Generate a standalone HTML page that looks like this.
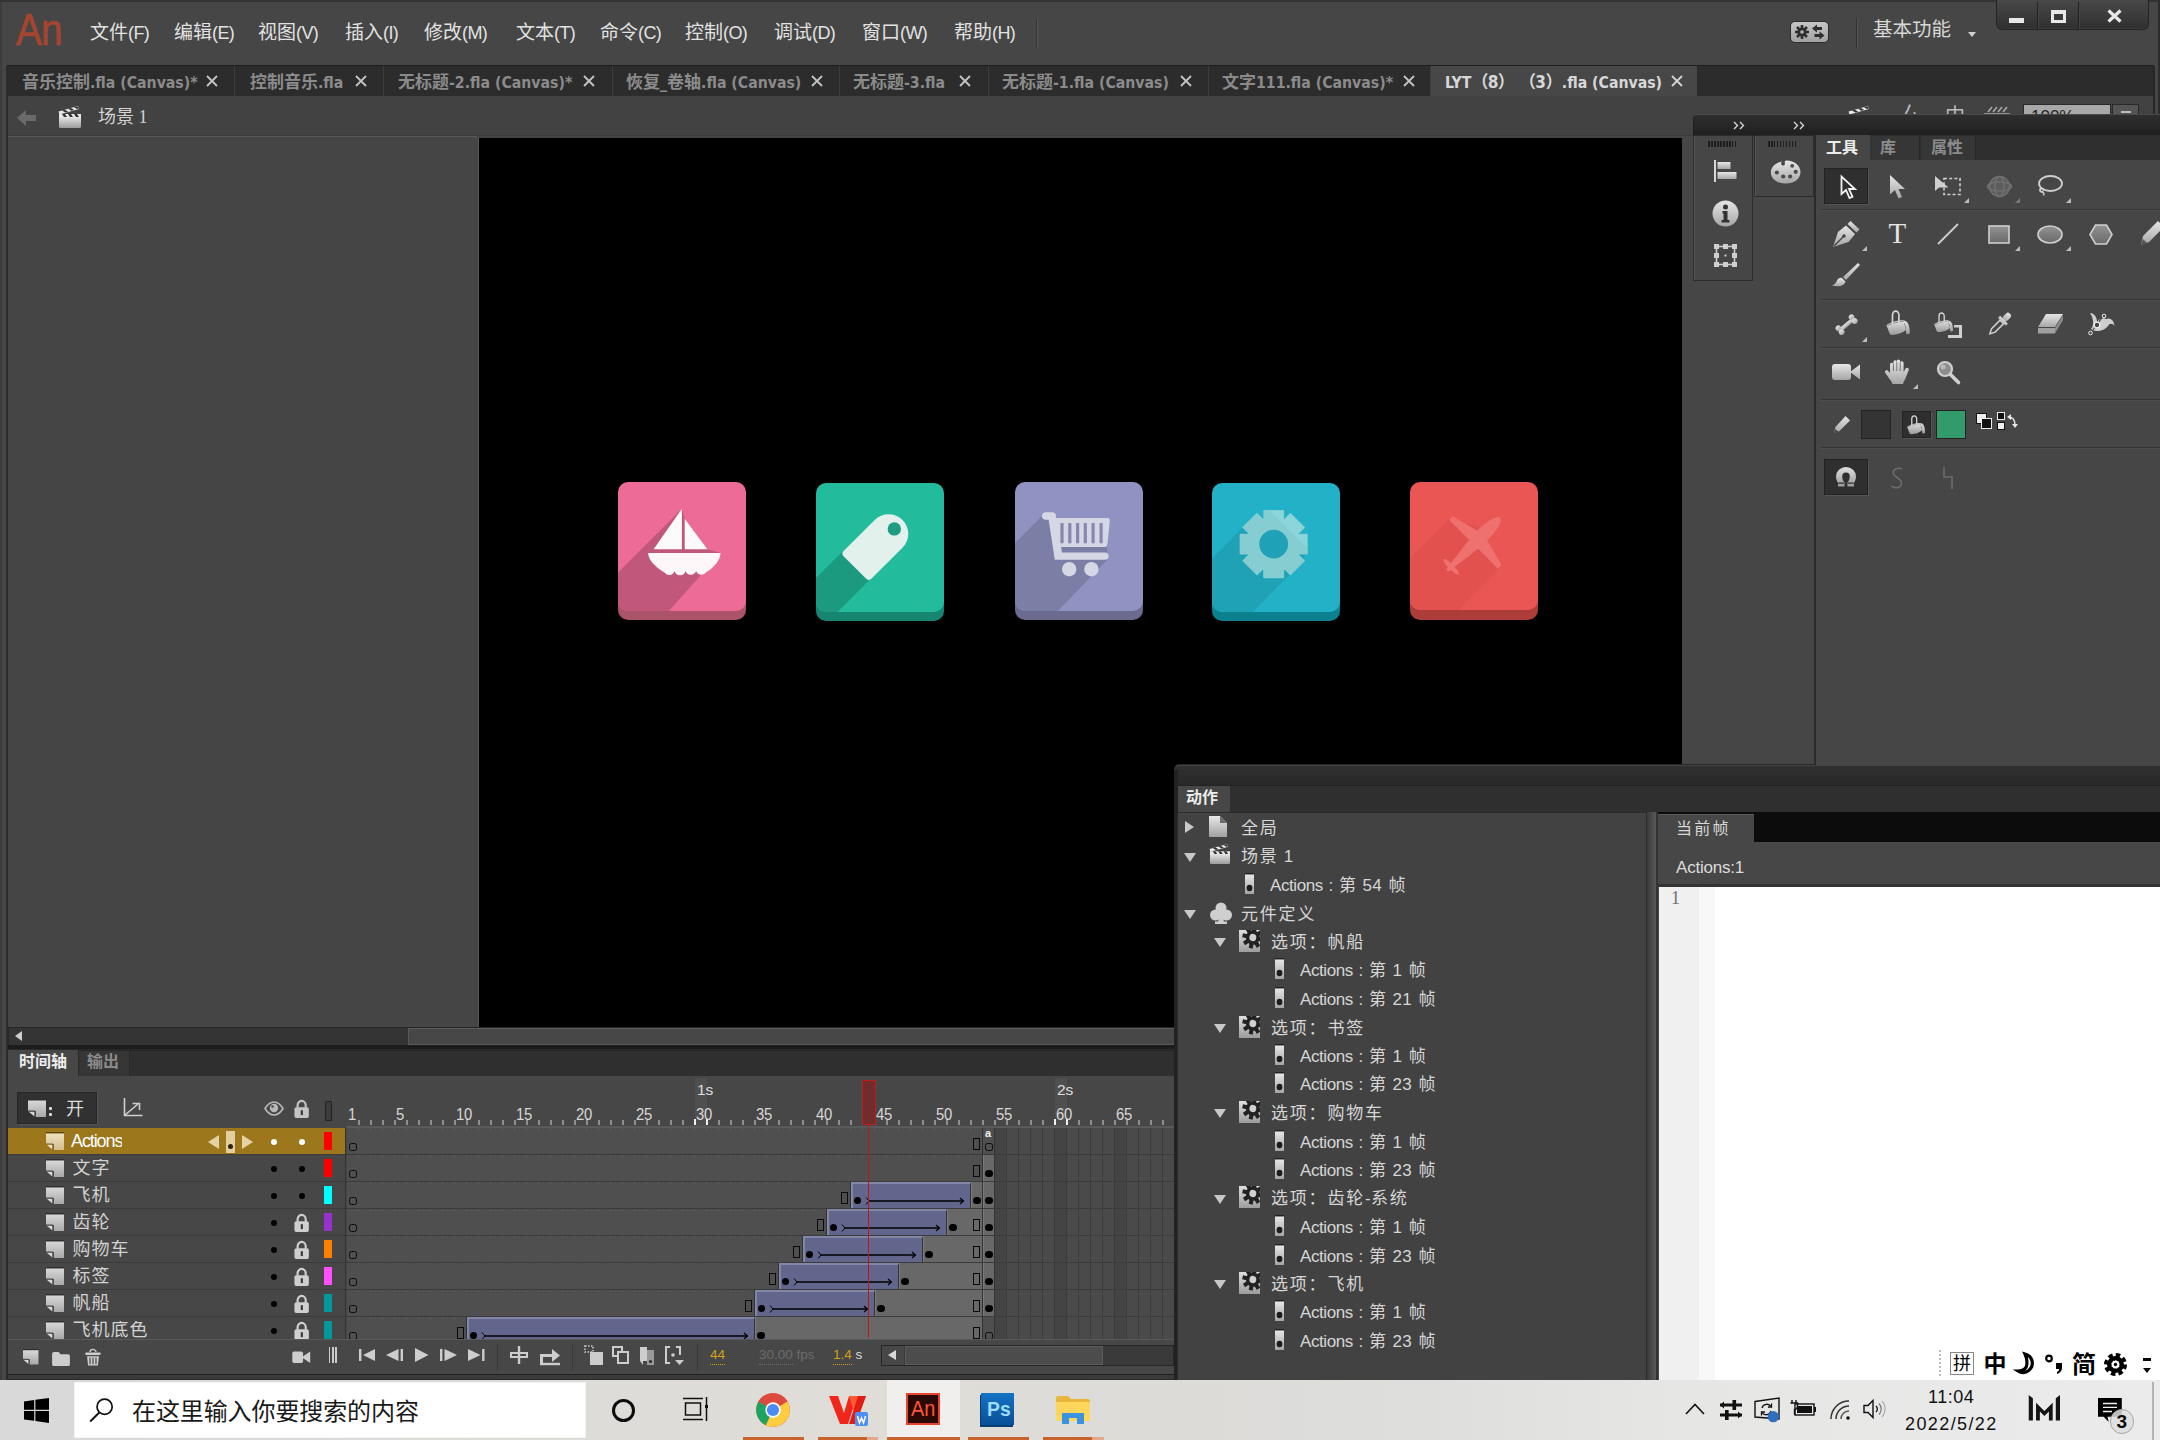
<!DOCTYPE html>
<html lang="zh-CN"><head><meta charset="utf-8"><title>Adobe Animate</title>
<style>
*{box-sizing:border-box;margin:0;padding:0}
html,body{width:2160px;height:1440px;overflow:hidden;background:#464646}
body{position:relative;font-family:"Liberation Sans","Noto Sans CJK SC",sans-serif;color:#d6d6d6;font-size:16px;line-height:1}
.a{position:absolute}
.t{position:absolute;white-space:nowrap;line-height:1}
svg{position:absolute;overflow:visible}
</style></head><body>

<div class="a" style="left:0;top:0;width:2160px;height:2px;background:#333"></div>
<div class="a" style="left:0;top:0;width:2px;height:1380px;background:#333"></div>
<div class="a" style="left:2158px;top:0px;width:2px;height:114px;background:#2c2c2c"></div>
<div class="t" style="left:16px;top:7px;font-size:45px;color:#a6452f;transform:scaleX(.86);transform-origin:0 0;letter-spacing:-1px;-webkit-text-stroke:.7px #a6452f">An</div>
<div class="t" style="left:90px;top:23px;font-size:19px;color:#e2e2e2">文件<span style="font-size:18px;letter-spacing:-.6px">(F)</span></div>
<div class="t" style="left:174px;top:23px;font-size:19px;color:#e2e2e2">编辑<span style="font-size:18px;letter-spacing:-.6px">(E)</span></div>
<div class="t" style="left:258px;top:23px;font-size:19px;color:#e2e2e2">视图<span style="font-size:18px;letter-spacing:-.6px">(V)</span></div>
<div class="t" style="left:345px;top:23px;font-size:19px;color:#e2e2e2">插入<span style="font-size:18px;letter-spacing:-.6px">(I)</span></div>
<div class="t" style="left:424px;top:23px;font-size:19px;color:#e2e2e2">修改<span style="font-size:18px;letter-spacing:-.6px">(M)</span></div>
<div class="t" style="left:516px;top:23px;font-size:19px;color:#e2e2e2">文本<span style="font-size:18px;letter-spacing:-.6px">(T)</span></div>
<div class="t" style="left:600px;top:23px;font-size:19px;color:#e2e2e2">命令<span style="font-size:18px;letter-spacing:-.6px">(C)</span></div>
<div class="t" style="left:685px;top:23px;font-size:19px;color:#e2e2e2">控制<span style="font-size:18px;letter-spacing:-.6px">(O)</span></div>
<div class="t" style="left:774px;top:23px;font-size:19px;color:#e2e2e2">调试<span style="font-size:18px;letter-spacing:-.6px">(D)</span></div>
<div class="t" style="left:862px;top:23px;font-size:19px;color:#e2e2e2">窗口<span style="font-size:18px;letter-spacing:-.6px">(W)</span></div>
<div class="t" style="left:954px;top:23px;font-size:19px;color:#e2e2e2">帮助<span style="font-size:18px;letter-spacing:-.6px">(H)</span></div>
<div class="a" style="left:1036px;top:18px;width:1px;height:30px;background:#333"></div><div class="a" style="left:1037px;top:18px;width:1px;height:30px;background:#565656"></div>
<div class="a" style="left:1790px;top:21px;width:39px;height:22px;border-radius:5px;background:linear-gradient(#c6c6c6,#a2a2a2);border:1px solid #2e2e2e"></div>
<svg style="left:1793px;top:23px" width="34" height="18" viewBox="0 0 34 18">
<g fill="#2e2e2e"><circle cx="9" cy="9" r="4.6"/><g stroke="#2e2e2e" stroke-width="2.6"><path d="M9 2v14M2 9h14M4 4l10 10M14 4L4 14"/></g><circle cx="9" cy="9" r="1.8" fill="#b8b8b8"/>
<path d="M24 1.5l-5 4 5 4v-2.6h5v-2.8h-5z"/><path d="M26.5 8.5l5 4-5 4v-2.6h-5v-2.8h5z"/></g></svg>
<div class="a" style="left:1856px;top:18px;width:1px;height:30px;background:#323232"></div><div class="a" style="left:1857px;top:18px;width:1px;height:30px;background:#545454"></div>
<div class="t" style="left:1873px;top:20px;font-size:19.5px;color:#d8d8d8">基本功能</div>
<div class="a" style="left:1968px;top:32px;width:0;height:0;border:4px solid transparent;border-top:5px solid #d0d0d0"></div>
<div class="a" style="left:1996px;top:0;width:153px;height:30px;border-radius:0 0 6px 6px;background:linear-gradient(#484848,#303030);border:1px solid #242424;border-top:none;box-shadow:inset 0 -1px 0 #3a3a3a"></div>
<div class="a" style="left:2037px;top:2px;width:1px;height:27px;background:#222"></div><div class="a" style="left:2038px;top:2px;width:1px;height:27px;background:#454545"></div>
<div class="a" style="left:2078px;top:2px;width:1px;height:27px;background:#222"></div><div class="a" style="left:2079px;top:2px;width:1px;height:27px;background:#454545"></div>
<div class="a" style="left:2009px;top:18px;width:15px;height:5px;background:#e8e8e8"></div>
<div class="a" style="left:2051px;top:10px;width:15px;height:13px;border:3px solid #e8e8e8;border-top-width:4px"></div>
<svg style="left:2107px;top:10px" width="15" height="12" viewBox="0 0 15 12"><path d="M1.5 0.5L13.5 11.5M13.5 0.5L1.5 11.5" stroke="#e8e8e8" stroke-width="3.2"/></svg>
<div class="a" style="left:7px;top:65px;width:2147px;height:31px;background:#2c2c2c;border-top:1px solid #1e1e1e;border-left:1px solid #1e1e1e"></div>
<div class="t" style="left:22px;top:73.500px;color:#8b8b8b;font-family:'DejaVu Sans Condensed','Noto Sans CJK SC',sans-serif;font-weight:bold;font-size:15.700px"><span style="font-size:17px">音乐控制</span>.fla (Canvas)*</div>
<svg style="left:206px;top:75px" width="12" height="12" viewBox="0 0 12 12"><path d="M1 1l10 10M11 1L1 11" stroke="#c4c4c4" stroke-width="1.800"/></svg>
<div class="a" style="left:234px;top:66px;width:1px;height:30px;background:#3d3d3d"></div>
<div class="t" style="left:250px;top:73.500px;color:#8b8b8b;font-family:'DejaVu Sans Condensed','Noto Sans CJK SC',sans-serif;font-weight:bold;font-size:15.700px"><span style="font-size:17px">控制音乐</span>.fla</div>
<svg style="left:355px;top:75px" width="12" height="12" viewBox="0 0 12 12"><path d="M1 1l10 10M11 1L1 11" stroke="#c4c4c4" stroke-width="1.800"/></svg>
<div class="a" style="left:383px;top:66px;width:1px;height:30px;background:#3d3d3d"></div>
<div class="t" style="left:398px;top:73.500px;color:#8b8b8b;font-family:'DejaVu Sans Condensed','Noto Sans CJK SC',sans-serif;font-weight:bold;font-size:15.700px"><span style="font-size:17px">无标题</span>-2.fla (Canvas)*</div>
<svg style="left:583px;top:75px" width="12" height="12" viewBox="0 0 12 12"><path d="M1 1l10 10M11 1L1 11" stroke="#c4c4c4" stroke-width="1.800"/></svg>
<div class="a" style="left:612px;top:66px;width:1px;height:30px;background:#3d3d3d"></div>
<div class="t" style="left:626px;top:73.500px;color:#8b8b8b;font-family:'DejaVu Sans Condensed','Noto Sans CJK SC',sans-serif;font-weight:bold;font-size:15.700px"><span style="font-size:17px">恢复</span>_<span style="font-size:17px">卷轴</span>.fla (Canvas)</div>
<svg style="left:811px;top:75px" width="12" height="12" viewBox="0 0 12 12"><path d="M1 1l10 10M11 1L1 11" stroke="#c4c4c4" stroke-width="1.800"/></svg>
<div class="a" style="left:839px;top:66px;width:1px;height:30px;background:#3d3d3d"></div>
<div class="t" style="left:853px;top:73.500px;color:#8b8b8b;font-family:'DejaVu Sans Condensed','Noto Sans CJK SC',sans-serif;font-weight:bold;font-size:15.700px"><span style="font-size:17px">无标题</span>-3.fla</div>
<svg style="left:959px;top:75px" width="12" height="12" viewBox="0 0 12 12"><path d="M1 1l10 10M11 1L1 11" stroke="#c4c4c4" stroke-width="1.800"/></svg>
<div class="a" style="left:988px;top:66px;width:1px;height:30px;background:#3d3d3d"></div>
<div class="t" style="left:1002px;top:73.500px;color:#8b8b8b;font-family:'DejaVu Sans Condensed','Noto Sans CJK SC',sans-serif;font-weight:bold;font-size:15.700px"><span style="font-size:17px">无标题</span>-1.fla (Canvas)</div>
<svg style="left:1180px;top:75px" width="12" height="12" viewBox="0 0 12 12"><path d="M1 1l10 10M11 1L1 11" stroke="#c4c4c4" stroke-width="1.800"/></svg>
<div class="a" style="left:1208px;top:66px;width:1px;height:30px;background:#3d3d3d"></div>
<div class="t" style="left:1222px;top:73.500px;color:#8b8b8b;font-family:'DejaVu Sans Condensed','Noto Sans CJK SC',sans-serif;font-weight:bold;font-size:15.700px"><span style="font-size:17px">文字</span>111.fla (Canvas)*</div>
<svg style="left:1403px;top:75px" width="12" height="12" viewBox="0 0 12 12"><path d="M1 1l10 10M11 1L1 11" stroke="#c4c4c4" stroke-width="1.800"/></svg>
<div class="a" style="left:1430px;top:66px;width:1px;height:30px;background:#3d3d3d"></div>
<div class="a" style="left:1431px;top:66px;width:266px;height:31px;background:#474747"></div>
<div class="t" style="left:1445px;top:73.500px;color:#d8d8d8;font-family:'DejaVu Sans Condensed','Noto Sans CJK SC',sans-serif;font-weight:bold;font-size:15.700px">LYT<span style="font-size:17px;letter-spacing:-.6px">（8） （3）</span>.fla (Canvas)</div>
<svg style="left:1671px;top:75px" width="12" height="12" viewBox="0 0 12 12"><path d="M1 1l10 10M11 1L1 11" stroke="#d4d4d4" stroke-width="1.800"/></svg>
<div class="a" style="left:2153px;top:66px;width:1.500px;height:48px;background:#262626"></div>
<div class="a" style="left:8px;top:96px;width:2145px;height:39px;background:#424242"></div>
<div class="a" style="left:8px;top:135px;width:2145px;height:1px;background:#3a3a3a"></div>
<svg style="left:17px;top:109px" width="19" height="18" viewBox="0 0 19 18"><path d="M0 9l9-8v5h10v6H9v5z" fill="#6a6a6a"/></svg>
<svg style="left:58px;top:106px" width="24.0" height="22.0" viewBox="0 0 24 22">
<defs><linearGradient id="cg58" x1="0" y1="0" x2="0" y2="1"><stop offset="0" stop-color="#e4e4e4"/><stop offset="1" stop-color="#9c9c9c"/></linearGradient></defs>
<path d="M1 11h22v9.500a1.500 1.500 0 0 1-1.500 1.500h-19a1.500 1.500 0 0 1-1.500-1.500z" fill="url(#cg58)"/>
<path d="M1 8h22v3H1z" fill="#e8e8e8"/><path d="M4 8l2 3h3l-2-3zM10 8l2 3h3l-2-3zM16 8l2 3h3l-2-3z" fill="#333"/>
<path d="M0.500 5.500L20 0l1 3L1.500 8.500z" fill="#e8e8e8"/><path d="M4 4.500l3.500 2 2.800-.8-3.500-2zM10 2.800l3.500 2 2.800-.8-3.500-2zM16 1.200l3 1.800 1.800-.5-.5-1.800-1.500-.3z" fill="#333"/>
</svg>
<div class="t" style="left:98px;top:108px;font-size:18px;color:#d2d2d2;font-family:'Liberation Serif','Noto Sans CJK SC',serif">场景 1</div>
<svg style="left:1848px;top:106px" width="24.0" height="22.0" viewBox="0 0 24 22">
<defs><linearGradient id="cg1848" x1="0" y1="0" x2="0" y2="1"><stop offset="0" stop-color="#e4e4e4"/><stop offset="1" stop-color="#9c9c9c"/></linearGradient></defs>
<path d="M1 11h22v9.500a1.500 1.500 0 0 1-1.500 1.500h-19a1.500 1.500 0 0 1-1.500-1.500z" fill="url(#cg1848)"/>
<path d="M1 8h22v3H1z" fill="#e8e8e8"/><path d="M4 8l2 3h3l-2-3zM10 8l2 3h3l-2-3zM16 8l2 3h3l-2-3z" fill="#333"/>
<path d="M0.500 5.500L20 0l1 3L1.500 8.500z" fill="#e8e8e8"/><path d="M4 4.500l3.500 2 2.800-.8-3.500-2zM10 2.800l3.500 2 2.800-.8-3.500-2zM16 1.200l3 1.800 1.800-.5-.5-1.800-1.500-.3z" fill="#333"/>
</svg>
<div class="t" style="left:1900px;top:104px;font-size:20px;color:#bbb">厶</div>
<div class="t" style="left:1945px;top:106px;font-size:20px;color:#bbb">中</div>
<svg style="left:1985px;top:106px" width="28" height="14" viewBox="0 0 28 14"><path d="M3 6l4-5M8 6l4-5M13 6l4-5M18 6l4-5M0 8h24v6H0z" stroke="#aaa" stroke-width="1.6" fill="none"/></svg>
<div class="a" style="left:2023px;top:104px;width:88px;height:14px;background:#a8a8a8;border:1px solid #2a2a2a"></div>
<div class="t" style="left:2031px;top:108px;font-size:17px;color:#222">100%</div>
<div class="a" style="left:2112px;top:104px;width:27px;height:14px;background:#555;border:1px solid #2a2a2a"></div>
<div class="a" style="left:2121px;top:111px;width:10px;height:2px;background:#bbb"></div>
<div class="a" style="left:8px;top:136px;width:1675px;height:890px;background:#454545"></div>
<div class="a" style="left:8px;top:136px;width:469px;height:1px;background:#585858"></div>
<div class="a" style="left:478px;top:138px;width:1px;height:888px;background:#555"></div>
<div class="a" style="left:479px;top:138px;width:1203px;height:889.500px;background:#000"></div>
<svg style="left:617.5px;top:482px" width="128" height="138" viewBox="0 0 128 138">
<defs><clipPath id="cpa"><rect x="0" y="0" width="128" height="129" rx="10" ry="10"/></clipPath></defs>
<rect x="0" y="10" width="128" height="128" rx="10" ry="10" fill="#ab5369"/>
<rect x="0" y="0" width="128" height="129" rx="10" ry="10" fill="#ed6c97"/>
<g clip-path="url(#cpa)"><polygon points="63.900,26.700 66.700,36.700 89.400,67.200 102.600,71.100 45.500,135 -5,135 -5,95.600" fill="#c1577b"/></g>
<path d="M63.900 26.700L35.600 67.200H63.900z" fill="#fbfbfb"/><path d="M66.700 36.700V67.200H89.400z" fill="#fbfbfb"/>
<path d="M30 71.100H102.600C101.800 78.500 97 85 87.600 90.700A5.600 5.600 0 0 1 78.050 89.050A5.600 5.600 0 0 1 67.500 89.050A5.600 5.600 0 0 1 56.650 89.050A5.600 5.600 0 0 1 46.800 90.700C37 85 30.800 78.500 30 71.100z" fill="#fdf7f9"/>
</svg>
<svg style="left:816px;top:483px" width="128" height="138" viewBox="0 0 128 138">
<defs><clipPath id="cpb"><rect x="0" y="0" width="128" height="129" rx="10" ry="10"/></clipPath></defs>
<rect x="0" y="10" width="128" height="128" rx="10" ry="10" fill="#178671"/>
<rect x="0" y="0" width="128" height="129" rx="10" ry="10" fill="#22bc9c"/>
<g clip-path="url(#cpb)"><polygon points="25,70 -75,170 -47.800,198.300 52.200,98.300 60,60" fill="#1c9a80"/></g>
<g transform="translate(72.600,50.800) rotate(-45)"><path d="M-43.700 -19.650H0a19.650 19.650 0 0 1 0 39.300H-43.700a4 4 0 0 1-4-4v-31.300a4 4 0 0 1 4-4z" fill="#e2f1eb"/></g><circle cx="78.300" cy="45.900" r="6.700" fill="#1f9c82"/>
</svg>
<svg style="left:1014.8px;top:482px" width="128" height="138" viewBox="0 0 128 138">
<defs><clipPath id="cpc"><rect x="0" y="0" width="128" height="129" rx="10" ry="10"/></clipPath></defs>
<rect x="0" y="10" width="128" height="128" rx="10" ry="10" fill="#6a6b8f"/>
<rect x="0" y="0" width="128" height="129" rx="10" ry="10" fill="#9093c1"/>
<g clip-path="url(#cpc)"><polygon points="27,33.900 -5,65.900 -5,135 37,135 93.100,77 92,65 94.500,39 41,38" fill="#7b7ea5"/></g>
<g fill="#d6d7e5"><rect x="27" y="30.200" width="14" height="7.600" rx="3.800"/>
<path d="M33.100 34L40.900 34L47 70.600H90a3.600 3.600 0 0 1 0 7.200H39.800z"/>
<path d="M38 36.100H92a2.800 2.800 0 0 1 2.800 3.100L92.400 62.500a2.800 2.800 0 0 1-2.800 2.500H43z"/>
<circle cx="54.200" cy="87.200" r="7.200"/><circle cx="76.400" cy="87.200" r="7.200"/></g><rect x="45.4" y="41.100" width="3.200" height="20.200" fill="#8688b0"/><rect x="53.2" y="41.100" width="3.200" height="20.200" fill="#8688b0"/><rect x="61.0" y="41.100" width="3.200" height="20.200" fill="#8688b0"/><rect x="68.7" y="41.100" width="3.200" height="20.200" fill="#8688b0"/><rect x="76.5" y="41.100" width="3.200" height="20.200" fill="#8688b0"/><rect x="84.5" y="41.100" width="3.200" height="20.200" fill="#8688b0"/>
</svg>
<svg style="left:1212px;top:483px" width="128" height="138" viewBox="0 0 128 138">
<defs><clipPath id="cpd"><rect x="0" y="0" width="128" height="129" rx="10" ry="10"/></clipPath></defs>
<rect x="0" y="10" width="128" height="128" rx="10" ry="10" fill="#0b808e"/>
<rect x="0" y="0" width="128" height="129" rx="10" ry="10" fill="#22b1c7"/>
<g clip-path="url(#cpd)"><polygon points="32.200,43.300 -5,80.500 -5,135 35,135 91.100,77.800 95,61 61,27" fill="#1fa1b6"/></g>
<defs><clipPath id="gcl"><path d="M52.0 41.1 L52.0 27.8 L71.4 27.8 L71.4 41.1 L69.0 40.1 L78.4 30.7 L92.1 44.4 L82.7 53.8 L81.7 51.4 L95.0 51.4 L95.0 70.8 L81.7 70.8 L82.7 68.4 L92.1 77.8 L78.4 91.5 L69.0 82.1 L71.4 81.1 L71.4 94.4 L52.0 94.4 L52.0 81.1 L54.4 82.1 L45.0 91.5 L31.3 77.8 L40.7 68.4 L41.7 70.8 L28.4 70.8 L28.4 51.4 L41.7 51.4 L40.7 53.8 L31.3 44.4 L45.0 30.7 L54.4 40.1Z"/><circle cx="61.700" cy="61.100" r="25.800"/></clipPath></defs>
<path d="M52.0 41.1 L52.0 27.8 L71.4 27.8 L71.4 41.1 L69.0 40.1 L78.4 30.7 L92.1 44.4 L82.7 53.8 L81.7 51.4 L95.0 51.4 L95.0 70.8 L81.7 70.8 L82.7 68.4 L92.1 77.8 L78.4 91.5 L69.0 82.1 L71.4 81.1 L71.4 94.4 L52.0 94.4 L52.0 81.1 L54.4 82.1 L45.0 91.5 L31.3 77.8 L40.7 68.4 L41.7 70.8 L28.4 70.8 L28.4 51.4 L41.7 51.4 L40.7 53.8 L31.3 44.4 L45.0 30.7 L54.4 40.1Z" fill="#85cdd1" stroke="#85cdd1" stroke-width="1.500" stroke-linejoin="round"/><circle cx="61.700" cy="61.100" r="25.800" fill="#85cdd1"/>
<g clip-path="url(#gcl)"><polygon points="40,10 110,10 110,80 " fill="#8ad6da"/></g>
<circle cx="61.700" cy="61.100" r="14.400" fill="#1fa2b7"/>
</svg>
<svg style="left:1409.8px;top:482px" width="128" height="138" viewBox="0 0 128 138">
<defs><clipPath id="cpe"><rect x="0" y="0" width="128" height="128" rx="10" ry="10"/></clipPath></defs>
<rect x="0" y="10" width="128" height="128" rx="10" ry="10" fill="#ad3d38"/>
<rect x="0" y="0" width="128" height="128" rx="10" ry="10" fill="#ea5653"/>
<g clip-path="url(#cpe)"><polygon points="39.200,36.700 -5,80.900 -5,135 42,135 90.300,85.500 70,45" fill="#e3514f"/></g>
<g transform="translate(65.900,60) rotate(-45)" fill="#ee7170"><path d="M34.500 0C34.500 -3.500 24 -7.200 9 -7C-8 -6.500-28 -3-39 -1.800a1.800 1.800 0 0 0 0 3.600C-28 3-8 6.500 9 7C24 7.200 34.500 3.500 34.500 0z"/>
<path d="M9.500 -5L1.800 -34.500L-3.400 -34.500L-3.200 -5zM9.500 5L1.800 34.500L-3.400 34.500L-3.200 5z"/>
<ellipse cx="-35" cy="0" rx="2.600" ry="10.800"/></g>
</svg>
<div class="a" style="left:8px;top:1027px;width:1166px;height:19px;background:#343434;border:1px solid #262626"></div>
<div class="a" style="left:408px;top:1028px;width:766px;height:17px;background:#474747;border:1px solid #5a5a5a;border-right:none"></div>
<div class="a" style="left:15px;top:1031px;width:0;height:0;border:5.500px solid transparent;border-right:7px solid #cfcfcf;border-left:none"></div>
<div class="a" style="left:6px;top:1045px;width:1169px;height:5px;background:#1c1c1c"></div>
<div class="a" style="left:6px;top:66px;width:2px;height:1314px;background:#2b2b2b"></div>
<div class="a" style="left:0px;top:2px;width:2px;height:1378px;background:#3c3c3c"></div>
<div class="a" style="left:7px;top:1049px;width:1168px;height:331px;background:#474747;border:1px solid #2a2a2a"></div>
<div class="a" style="left:8px;top:1050px;width:1166px;height:26px;background:#2f2f2f;border-top:1px solid #262626"></div>
<div class="a" style="left:8px;top:1050px;width:70px;height:26px;background:#474747"></div>
<div class="a" style="left:78px;top:1051px;width:52px;height:25px;background:#363636;border-right:1px solid #2a2a2a;border-left:1px solid #2a2a2a"></div>
<div class="t" style="left:19px;top:1054px;font-size:16px;font-weight:bold;color:#ececec">时间轴</div>
<div class="t" style="left:87px;top:1054px;font-size:16px;font-weight:bold;color:#8a8a8a">输出</div>
<div class="a" style="left:17px;top:1092px;width:80px;height:32px;background:#313131;border:1px solid #262626;box-shadow:1px 1px 0 #555"></div>
<svg style="left:28px;top:1099px" width="18" height="18" viewBox="0 0 18 18"><defs><linearGradient id="lghb" x1="0" y1="0" x2="0" y2="1"><stop offset="0" stop-color="#d8d8d8"/><stop offset="1" stop-color="#a8a8a8"/></linearGradient></defs>
<path d="M0 0h18v1.500H0z" fill="#2e2e2e"/><path d="M0 1.500h18V18H7.500v-6H0z" fill="url(#lghb)"/><path d="M0.500 12.500h6.500v5.500z" fill="#d8d8d8"/><path d="M7 12v6" stroke="#2e2e2e" stroke-width="1.200"/><path d="M0 12h7" stroke="#2e2e2e" stroke-width=".8"/></svg>
<div class="a" style="left:49px;top:1107px;width:3px;height:3px;background:#ddd;border-radius:1px;box-shadow:0 6px 0 #ddd"></div>
<div class="t" style="left:66px;top:1100px;font-size:18px;color:#dcdcdc">开</div>
<svg style="left:123px;top:1098px" width="20" height="19" viewBox="0 0 20 19"><path d="M1.500 0v17.500h18" fill="none" stroke="#cfcfcf" stroke-width="1.600"/><path d="M2 17L15 6" stroke="#cfcfcf" stroke-width="1.600"/><path d="M9.500 5.500h7v6.500" fill="none" stroke="#cfcfcf" stroke-width="1.600"/></svg>
<svg style="left:264px;top:1101px" width="20" height="15" viewBox="0 0 20 15"><path d="M1 7.500C4 2.500 7 1 10 1s6 1.500 9 6.500c-3 5-6 6.500-9 6.500s-6-1.500-9-6.500z" fill="none" stroke="#b8b8b8" stroke-width="1.600"/><circle cx="10" cy="7" r="4.200" fill="#b8b8b8"/><circle cx="8.500" cy="5.500" r="1.300" fill="#474747"/></svg>
<svg style="left:294px;top:1098.5px" width="15.300" height="19.500" viewBox="0 0 17 20" preserveAspectRatio="none"><path d="M4 9V6.500a4.500 4.500 0 0 1 9 0V9" fill="none" stroke="#c4c4c4" stroke-width="2.400"/><rect x="0.500" y="8.500" width="16" height="11" rx="2" fill="#c4c4c4"/><rect x="7.500" y="11.500" width="2.400" height="5" fill="#3a3a3a"/></svg>
<div class="a" style="left:325px;top:1101px;width:7px;height:20px;border:1px solid #222;background:#3c3c3c;border-radius:1px"></div>
<div class="a" style="left:346px;top:1076px;width:828px;height:51px;background:#474747"></div>
<div class="a" style="left:695px;top:1078px;width:12px;height:49px;background:#4f4f4f"></div>
<div class="a" style="left:1055px;top:1078px;width:12px;height:49px;background:#4f4f4f"></div>
<div class="a" style="left:346px;top:1126px;width:828px;height:2px;background:#5a5a5a"></div>
<div class="a" style="left:358px;top:1120px;width:1.500px;height:5px;background:#8e8e8e"></div><div class="a" style="left:370px;top:1120px;width:1.500px;height:5px;background:#8e8e8e"></div><div class="a" style="left:382px;top:1120px;width:1.500px;height:5px;background:#8e8e8e"></div><div class="a" style="left:394px;top:1120px;width:1.500px;height:5px;background:#8e8e8e"></div><div class="a" style="left:406px;top:1120px;width:1.500px;height:5px;background:#8e8e8e"></div><div class="a" style="left:418px;top:1120px;width:1.500px;height:5px;background:#8e8e8e"></div><div class="a" style="left:430px;top:1120px;width:1.500px;height:5px;background:#8e8e8e"></div><div class="a" style="left:442px;top:1120px;width:1.500px;height:5px;background:#8e8e8e"></div><div class="a" style="left:454px;top:1120px;width:1.500px;height:5px;background:#8e8e8e"></div><div class="a" style="left:466px;top:1120px;width:1.500px;height:5px;background:#8e8e8e"></div><div class="a" style="left:478px;top:1120px;width:1.500px;height:5px;background:#8e8e8e"></div><div class="a" style="left:490px;top:1120px;width:1.500px;height:5px;background:#8e8e8e"></div><div class="a" style="left:502px;top:1120px;width:1.500px;height:5px;background:#8e8e8e"></div><div class="a" style="left:514px;top:1120px;width:1.500px;height:5px;background:#8e8e8e"></div><div class="a" style="left:526px;top:1120px;width:1.500px;height:5px;background:#8e8e8e"></div><div class="a" style="left:538px;top:1120px;width:1.500px;height:5px;background:#8e8e8e"></div><div class="a" style="left:550px;top:1120px;width:1.500px;height:5px;background:#8e8e8e"></div><div class="a" style="left:562px;top:1120px;width:1.500px;height:5px;background:#8e8e8e"></div><div class="a" style="left:574px;top:1120px;width:1.500px;height:5px;background:#8e8e8e"></div><div class="a" style="left:586px;top:1120px;width:1.500px;height:5px;background:#8e8e8e"></div><div class="a" style="left:598px;top:1120px;width:1.500px;height:5px;background:#8e8e8e"></div><div class="a" style="left:610px;top:1120px;width:1.500px;height:5px;background:#8e8e8e"></div><div class="a" style="left:622px;top:1120px;width:1.500px;height:5px;background:#8e8e8e"></div><div class="a" style="left:634px;top:1120px;width:1.500px;height:5px;background:#8e8e8e"></div><div class="a" style="left:646px;top:1120px;width:1.500px;height:5px;background:#8e8e8e"></div><div class="a" style="left:658px;top:1120px;width:1.500px;height:5px;background:#8e8e8e"></div><div class="a" style="left:670px;top:1120px;width:1.500px;height:5px;background:#8e8e8e"></div><div class="a" style="left:682px;top:1120px;width:1.500px;height:5px;background:#8e8e8e"></div><div class="a" style="left:694px;top:1120px;width:1.500px;height:5px;background:#8e8e8e"></div><div class="a" style="left:706px;top:1120px;width:1.500px;height:5px;background:#8e8e8e"></div><div class="a" style="left:718px;top:1120px;width:1.500px;height:5px;background:#8e8e8e"></div><div class="a" style="left:730px;top:1120px;width:1.500px;height:5px;background:#8e8e8e"></div><div class="a" style="left:742px;top:1120px;width:1.500px;height:5px;background:#8e8e8e"></div><div class="a" style="left:754px;top:1120px;width:1.500px;height:5px;background:#8e8e8e"></div><div class="a" style="left:766px;top:1120px;width:1.500px;height:5px;background:#8e8e8e"></div><div class="a" style="left:778px;top:1120px;width:1.500px;height:5px;background:#8e8e8e"></div><div class="a" style="left:790px;top:1120px;width:1.500px;height:5px;background:#8e8e8e"></div><div class="a" style="left:802px;top:1120px;width:1.500px;height:5px;background:#8e8e8e"></div><div class="a" style="left:814px;top:1120px;width:1.500px;height:5px;background:#8e8e8e"></div><div class="a" style="left:826px;top:1120px;width:1.500px;height:5px;background:#8e8e8e"></div><div class="a" style="left:838px;top:1120px;width:1.500px;height:5px;background:#8e8e8e"></div><div class="a" style="left:850px;top:1120px;width:1.500px;height:5px;background:#8e8e8e"></div><div class="a" style="left:862px;top:1120px;width:1.500px;height:5px;background:#8e8e8e"></div><div class="a" style="left:874px;top:1120px;width:1.500px;height:5px;background:#8e8e8e"></div><div class="a" style="left:886px;top:1120px;width:1.500px;height:5px;background:#8e8e8e"></div><div class="a" style="left:898px;top:1120px;width:1.500px;height:5px;background:#8e8e8e"></div><div class="a" style="left:910px;top:1120px;width:1.500px;height:5px;background:#8e8e8e"></div><div class="a" style="left:922px;top:1120px;width:1.500px;height:5px;background:#8e8e8e"></div><div class="a" style="left:934px;top:1120px;width:1.500px;height:5px;background:#8e8e8e"></div><div class="a" style="left:946px;top:1120px;width:1.500px;height:5px;background:#8e8e8e"></div><div class="a" style="left:958px;top:1120px;width:1.500px;height:5px;background:#8e8e8e"></div><div class="a" style="left:970px;top:1120px;width:1.500px;height:5px;background:#8e8e8e"></div><div class="a" style="left:982px;top:1120px;width:1.500px;height:5px;background:#8e8e8e"></div><div class="a" style="left:994px;top:1120px;width:1.500px;height:5px;background:#8e8e8e"></div><div class="a" style="left:1006px;top:1120px;width:1.500px;height:5px;background:#8e8e8e"></div><div class="a" style="left:1018px;top:1120px;width:1.500px;height:5px;background:#8e8e8e"></div><div class="a" style="left:1030px;top:1120px;width:1.500px;height:5px;background:#8e8e8e"></div><div class="a" style="left:1042px;top:1120px;width:1.500px;height:5px;background:#8e8e8e"></div><div class="a" style="left:1054px;top:1120px;width:1.500px;height:5px;background:#8e8e8e"></div><div class="a" style="left:1066px;top:1120px;width:1.500px;height:5px;background:#8e8e8e"></div><div class="a" style="left:1078px;top:1120px;width:1.500px;height:5px;background:#8e8e8e"></div><div class="a" style="left:1090px;top:1120px;width:1.500px;height:5px;background:#8e8e8e"></div><div class="a" style="left:1102px;top:1120px;width:1.500px;height:5px;background:#8e8e8e"></div><div class="a" style="left:1114px;top:1120px;width:1.500px;height:5px;background:#8e8e8e"></div><div class="a" style="left:1126px;top:1120px;width:1.500px;height:5px;background:#8e8e8e"></div><div class="a" style="left:1138px;top:1120px;width:1.500px;height:5px;background:#8e8e8e"></div><div class="a" style="left:1150px;top:1120px;width:1.500px;height:5px;background:#8e8e8e"></div><div class="a" style="left:1162px;top:1120px;width:1.500px;height:5px;background:#8e8e8e"></div><div class="a" style="left:1174px;top:1120px;width:1.500px;height:5px;background:#8e8e8e"></div>
<div class="a" style="left:694px;top:1119px;width:2px;height:6px;background:#f0f0f0"></div><div class="a" style="left:706px;top:1119px;width:2px;height:6px;background:#f0f0f0"></div>
<div class="a" style="left:1054px;top:1119px;width:2px;height:6px;background:#f0f0f0"></div><div class="a" style="left:1066px;top:1119px;width:2px;height:6px;background:#f0f0f0"></div>
<div class="t" style="left:348px;top:1106px;font-size:16.500px;color:#d8d8d8;letter-spacing:-.3px;transform:scaleX(.9);transform-origin:0 0">1</div>
<div class="t" style="left:396px;top:1106px;font-size:16.500px;color:#d8d8d8;letter-spacing:-.3px;transform:scaleX(.9);transform-origin:0 0">5</div>
<div class="t" style="left:456px;top:1106px;font-size:16.500px;color:#d8d8d8;letter-spacing:-.3px;transform:scaleX(.9);transform-origin:0 0">10</div>
<div class="t" style="left:516px;top:1106px;font-size:16.500px;color:#d8d8d8;letter-spacing:-.3px;transform:scaleX(.9);transform-origin:0 0">15</div>
<div class="t" style="left:576px;top:1106px;font-size:16.500px;color:#d8d8d8;letter-spacing:-.3px;transform:scaleX(.9);transform-origin:0 0">20</div>
<div class="t" style="left:636px;top:1106px;font-size:16.500px;color:#d8d8d8;letter-spacing:-.3px;transform:scaleX(.9);transform-origin:0 0">25</div>
<div class="t" style="left:696px;top:1106px;font-size:16.500px;color:#d8d8d8;letter-spacing:-.3px;transform:scaleX(.9);transform-origin:0 0">30</div>
<div class="t" style="left:756px;top:1106px;font-size:16.500px;color:#d8d8d8;letter-spacing:-.3px;transform:scaleX(.9);transform-origin:0 0">35</div>
<div class="t" style="left:816px;top:1106px;font-size:16.500px;color:#d8d8d8;letter-spacing:-.3px;transform:scaleX(.9);transform-origin:0 0">40</div>
<div class="t" style="left:876px;top:1106px;font-size:16.500px;color:#d8d8d8;letter-spacing:-.3px;transform:scaleX(.9);transform-origin:0 0">45</div>
<div class="t" style="left:936px;top:1106px;font-size:16.500px;color:#d8d8d8;letter-spacing:-.3px;transform:scaleX(.9);transform-origin:0 0">50</div>
<div class="t" style="left:996px;top:1106px;font-size:16.500px;color:#d8d8d8;letter-spacing:-.3px;transform:scaleX(.9);transform-origin:0 0">55</div>
<div class="t" style="left:1056px;top:1106px;font-size:16.500px;color:#d8d8d8;letter-spacing:-.3px;transform:scaleX(.9);transform-origin:0 0">60</div>
<div class="t" style="left:1116px;top:1106px;font-size:16.500px;color:#d8d8d8;letter-spacing:-.3px;transform:scaleX(.9);transform-origin:0 0">65</div>
<div class="t" style="left:697px;top:1081.500px;font-size:15.500px;color:#dedede">1s</div>
<div class="t" style="left:1057px;top:1081.500px;font-size:15.500px;color:#dedede">2s</div>
<div class="a" style="left:8px;top:1128px;width:338px;height:26px;background:#9c771c"></div>
<div class="a" style="left:8px;top:1154px;width:1166px;height:1px;background:#3b3b3b"></div>
<div class="a" style="left:46px;top:1132px;width:18px;height:19px;overflow:hidden"><svg style="left:0px;top:0px" width="18" height="18" viewBox="0 0 18 18"><defs><linearGradient id="lgr0" x1="0" y1="0" x2="0" y2="1"><stop offset="0" stop-color="#f0e2c0"/><stop offset="1" stop-color="#d2bd8c"/></linearGradient></defs>
<path d="M0 0h18v1.500H0z" fill="#5a4510"/><path d="M0 1.500h18V18H7.500v-6H0z" fill="url(#lgr0)"/><path d="M0.500 12.500h6.500v5.500z" fill="#f0e2c0"/><path d="M7 12v6" stroke="#5a4510" stroke-width="1.200"/><path d="M0 12h7" stroke="#5a4510" stroke-width=".8"/></svg></div>
<div class="t" style="left:71px;top:1132px;font-size:18px;color:#fff;height:22px;overflow:hidden;letter-spacing:-1.100px">Actions</div>
<div class="a" style="left:271px;top:1139px;width:6px;height:6px;border-radius:3px;background:#fff"></div>
<div class="a" style="left:299px;top:1139px;width:6px;height:6px;border-radius:3px;background:#fff"></div>
<div class="a" style="left:324px;top:1132px;width:8px;height:18px;background:#ff0000"></div>
<div class="a" style="left:8px;top:1155px;width:338px;height:26px;background:#474747"></div>
<div class="a" style="left:8px;top:1181px;width:1166px;height:1px;background:#3b3b3b"></div>
<div class="a" style="left:46px;top:1159px;width:18px;height:19px;overflow:hidden"><svg style="left:0px;top:0px" width="18" height="18" viewBox="0 0 18 18"><defs><linearGradient id="lgr1" x1="0" y1="0" x2="0" y2="1"><stop offset="0" stop-color="#d8d8d8"/><stop offset="1" stop-color="#a8a8a8"/></linearGradient></defs>
<path d="M0 0h18v1.500H0z" fill="#2e2e2e"/><path d="M0 1.500h18V18H7.500v-6H0z" fill="url(#lgr1)"/><path d="M0.500 12.500h6.500v5.500z" fill="#d8d8d8"/><path d="M7 12v6" stroke="#2e2e2e" stroke-width="1.200"/><path d="M0 12h7" stroke="#2e2e2e" stroke-width=".8"/></svg></div>
<div class="t" style="left:72.5px;top:1159px;font-size:18px;color:#d2d2d2;height:22px;overflow:hidden;letter-spacing:1px">文字</div>
<div class="a" style="left:271px;top:1166px;width:6px;height:6px;border-radius:3px;background:#000"></div>
<div class="a" style="left:299px;top:1166px;width:6px;height:6px;border-radius:3px;background:#000"></div>
<div class="a" style="left:324px;top:1159px;width:8px;height:18px;background:#ff0000"></div>
<div class="a" style="left:8px;top:1182px;width:338px;height:26px;background:#474747"></div>
<div class="a" style="left:8px;top:1208px;width:1166px;height:1px;background:#3b3b3b"></div>
<div class="a" style="left:46px;top:1186px;width:18px;height:19px;overflow:hidden"><svg style="left:0px;top:0px" width="18" height="18" viewBox="0 0 18 18"><defs><linearGradient id="lgr2" x1="0" y1="0" x2="0" y2="1"><stop offset="0" stop-color="#d8d8d8"/><stop offset="1" stop-color="#a8a8a8"/></linearGradient></defs>
<path d="M0 0h18v1.500H0z" fill="#2e2e2e"/><path d="M0 1.500h18V18H7.500v-6H0z" fill="url(#lgr2)"/><path d="M0.500 12.500h6.500v5.500z" fill="#d8d8d8"/><path d="M7 12v6" stroke="#2e2e2e" stroke-width="1.200"/><path d="M0 12h7" stroke="#2e2e2e" stroke-width=".8"/></svg></div>
<div class="t" style="left:72.5px;top:1186px;font-size:18px;color:#d2d2d2;height:22px;overflow:hidden;letter-spacing:1px">飞机</div>
<div class="a" style="left:271px;top:1193px;width:6px;height:6px;border-radius:3px;background:#000"></div>
<div class="a" style="left:299px;top:1193px;width:6px;height:6px;border-radius:3px;background:#000"></div>
<div class="a" style="left:324px;top:1186px;width:8px;height:18px;background:#00ffff"></div>
<div class="a" style="left:8px;top:1209px;width:338px;height:26px;background:#474747"></div>
<div class="a" style="left:8px;top:1235px;width:1166px;height:1px;background:#3b3b3b"></div>
<div class="a" style="left:46px;top:1213px;width:18px;height:19px;overflow:hidden"><svg style="left:0px;top:0px" width="18" height="18" viewBox="0 0 18 18"><defs><linearGradient id="lgr3" x1="0" y1="0" x2="0" y2="1"><stop offset="0" stop-color="#d8d8d8"/><stop offset="1" stop-color="#a8a8a8"/></linearGradient></defs>
<path d="M0 0h18v1.500H0z" fill="#2e2e2e"/><path d="M0 1.500h18V18H7.500v-6H0z" fill="url(#lgr3)"/><path d="M0.500 12.500h6.500v5.500z" fill="#d8d8d8"/><path d="M7 12v6" stroke="#2e2e2e" stroke-width="1.200"/><path d="M0 12h7" stroke="#2e2e2e" stroke-width=".8"/></svg></div>
<div class="t" style="left:72.5px;top:1213px;font-size:18px;color:#d2d2d2;height:22px;overflow:hidden;letter-spacing:1px">齿轮</div>
<div class="a" style="left:271px;top:1220px;width:6px;height:6px;border-radius:3px;background:#000"></div>
<div class="a" style="left:293px;top:1213px;width:17px;height:20px;overflow:hidden"><svg style="left:1px;top:-0.5px" width="15.300" height="19.500" viewBox="0 0 17 20" preserveAspectRatio="none"><path d="M4 9V6.500a4.500 4.500 0 0 1 9 0V9" fill="none" stroke="#cfcfcf" stroke-width="2.400"/><rect x="0.500" y="8.500" width="16" height="11" rx="2" fill="#cfcfcf"/><rect x="7.500" y="11.500" width="2.400" height="5" fill="#3a3a3a"/></svg></div>
<div class="a" style="left:324px;top:1213px;width:8px;height:18px;background:#9932cc"></div>
<div class="a" style="left:8px;top:1236px;width:338px;height:26px;background:#474747"></div>
<div class="a" style="left:8px;top:1262px;width:1166px;height:1px;background:#3b3b3b"></div>
<div class="a" style="left:46px;top:1240px;width:18px;height:19px;overflow:hidden"><svg style="left:0px;top:0px" width="18" height="18" viewBox="0 0 18 18"><defs><linearGradient id="lgr4" x1="0" y1="0" x2="0" y2="1"><stop offset="0" stop-color="#d8d8d8"/><stop offset="1" stop-color="#a8a8a8"/></linearGradient></defs>
<path d="M0 0h18v1.500H0z" fill="#2e2e2e"/><path d="M0 1.500h18V18H7.500v-6H0z" fill="url(#lgr4)"/><path d="M0.500 12.500h6.500v5.500z" fill="#d8d8d8"/><path d="M7 12v6" stroke="#2e2e2e" stroke-width="1.200"/><path d="M0 12h7" stroke="#2e2e2e" stroke-width=".8"/></svg></div>
<div class="t" style="left:72.5px;top:1240px;font-size:18px;color:#d2d2d2;height:22px;overflow:hidden;letter-spacing:1px">购物车</div>
<div class="a" style="left:271px;top:1247px;width:6px;height:6px;border-radius:3px;background:#000"></div>
<div class="a" style="left:293px;top:1240px;width:17px;height:20px;overflow:hidden"><svg style="left:1px;top:-0.5px" width="15.300" height="19.500" viewBox="0 0 17 20" preserveAspectRatio="none"><path d="M4 9V6.500a4.500 4.500 0 0 1 9 0V9" fill="none" stroke="#cfcfcf" stroke-width="2.400"/><rect x="0.500" y="8.500" width="16" height="11" rx="2" fill="#cfcfcf"/><rect x="7.500" y="11.500" width="2.400" height="5" fill="#3a3a3a"/></svg></div>
<div class="a" style="left:324px;top:1240px;width:8px;height:18px;background:#ff7f00"></div>
<div class="a" style="left:8px;top:1263px;width:338px;height:26px;background:#474747"></div>
<div class="a" style="left:8px;top:1289px;width:1166px;height:1px;background:#3b3b3b"></div>
<div class="a" style="left:46px;top:1267px;width:18px;height:19px;overflow:hidden"><svg style="left:0px;top:0px" width="18" height="18" viewBox="0 0 18 18"><defs><linearGradient id="lgr5" x1="0" y1="0" x2="0" y2="1"><stop offset="0" stop-color="#d8d8d8"/><stop offset="1" stop-color="#a8a8a8"/></linearGradient></defs>
<path d="M0 0h18v1.500H0z" fill="#2e2e2e"/><path d="M0 1.500h18V18H7.500v-6H0z" fill="url(#lgr5)"/><path d="M0.500 12.500h6.500v5.500z" fill="#d8d8d8"/><path d="M7 12v6" stroke="#2e2e2e" stroke-width="1.200"/><path d="M0 12h7" stroke="#2e2e2e" stroke-width=".8"/></svg></div>
<div class="t" style="left:72.5px;top:1267px;font-size:18px;color:#d2d2d2;height:22px;overflow:hidden;letter-spacing:1px">标签</div>
<div class="a" style="left:271px;top:1274px;width:6px;height:6px;border-radius:3px;background:#000"></div>
<div class="a" style="left:293px;top:1267px;width:17px;height:20px;overflow:hidden"><svg style="left:1px;top:-0.5px" width="15.300" height="19.500" viewBox="0 0 17 20" preserveAspectRatio="none"><path d="M4 9V6.500a4.500 4.500 0 0 1 9 0V9" fill="none" stroke="#cfcfcf" stroke-width="2.400"/><rect x="0.500" y="8.500" width="16" height="11" rx="2" fill="#cfcfcf"/><rect x="7.500" y="11.500" width="2.400" height="5" fill="#3a3a3a"/></svg></div>
<div class="a" style="left:324px;top:1267px;width:8px;height:18px;background:#ff4fff"></div>
<div class="a" style="left:8px;top:1290px;width:338px;height:26px;background:#474747"></div>
<div class="a" style="left:8px;top:1316px;width:1166px;height:1px;background:#3b3b3b"></div>
<div class="a" style="left:46px;top:1294px;width:18px;height:19px;overflow:hidden"><svg style="left:0px;top:0px" width="18" height="18" viewBox="0 0 18 18"><defs><linearGradient id="lgr6" x1="0" y1="0" x2="0" y2="1"><stop offset="0" stop-color="#d8d8d8"/><stop offset="1" stop-color="#a8a8a8"/></linearGradient></defs>
<path d="M0 0h18v1.500H0z" fill="#2e2e2e"/><path d="M0 1.500h18V18H7.500v-6H0z" fill="url(#lgr6)"/><path d="M0.500 12.500h6.500v5.500z" fill="#d8d8d8"/><path d="M7 12v6" stroke="#2e2e2e" stroke-width="1.200"/><path d="M0 12h7" stroke="#2e2e2e" stroke-width=".8"/></svg></div>
<div class="t" style="left:72.5px;top:1294px;font-size:18px;color:#d2d2d2;height:22px;overflow:hidden;letter-spacing:1px">帆船</div>
<div class="a" style="left:271px;top:1301px;width:6px;height:6px;border-radius:3px;background:#000"></div>
<div class="a" style="left:293px;top:1294px;width:17px;height:20px;overflow:hidden"><svg style="left:1px;top:-0.5px" width="15.300" height="19.500" viewBox="0 0 17 20" preserveAspectRatio="none"><path d="M4 9V6.500a4.500 4.500 0 0 1 9 0V9" fill="none" stroke="#cfcfcf" stroke-width="2.400"/><rect x="0.500" y="8.500" width="16" height="11" rx="2" fill="#cfcfcf"/><rect x="7.500" y="11.500" width="2.400" height="5" fill="#3a3a3a"/></svg></div>
<div class="a" style="left:324px;top:1294px;width:8px;height:18px;background:#009999"></div>
<div class="a" style="left:8px;top:1317px;width:338px;height:23px;background:#474747"></div>
<div class="a" style="left:46px;top:1321px;width:18px;height:19px;overflow:hidden"><svg style="left:0px;top:0px" width="18" height="18" viewBox="0 0 18 18"><defs><linearGradient id="lgr7" x1="0" y1="0" x2="0" y2="1"><stop offset="0" stop-color="#d8d8d8"/><stop offset="1" stop-color="#a8a8a8"/></linearGradient></defs>
<path d="M0 0h18v1.500H0z" fill="#2e2e2e"/><path d="M0 1.500h18V18H7.500v-6H0z" fill="url(#lgr7)"/><path d="M0.500 12.500h6.500v5.500z" fill="#d8d8d8"/><path d="M7 12v6" stroke="#2e2e2e" stroke-width="1.200"/><path d="M0 12h7" stroke="#2e2e2e" stroke-width=".8"/></svg></div>
<div class="t" style="left:72.5px;top:1321px;font-size:18px;color:#d2d2d2;height:19px;overflow:hidden;letter-spacing:1px">飞机底色</div>
<div class="a" style="left:271px;top:1328px;width:6px;height:6px;border-radius:3px;background:#000"></div>
<div class="a" style="left:293px;top:1321px;width:17px;height:19px;overflow:hidden"><svg style="left:1px;top:-0.5px" width="15.300" height="19.500" viewBox="0 0 17 20" preserveAspectRatio="none"><path d="M4 9V6.500a4.500 4.500 0 0 1 9 0V9" fill="none" stroke="#cfcfcf" stroke-width="2.400"/><rect x="0.500" y="8.500" width="16" height="11" rx="2" fill="#cfcfcf"/><rect x="7.500" y="11.500" width="2.400" height="5" fill="#3a3a3a"/></svg></div>
<div class="a" style="left:324px;top:1321px;width:8px;height:18px;background:#009999"></div>
<div class="a" style="left:208px;top:1135px;width:0;height:0;border:7px solid transparent;border-right:11px solid #e6d3a3;border-left:none"></div>
<div class="a" style="left:226px;top:1131px;width:9px;height:22px;background:#e2cf9f"></div><div class="a" style="left:228px;top:1144px;width:5px;height:5px;border-radius:3px;background:#2a2210"></div>
<div class="a" style="left:242px;top:1135px;width:0;height:0;border:7px solid transparent;border-left:11px solid #e6d3a3;border-right:none"></div>
<div class="a" style="left:345px;top:1127px;width:1px;height:249px;background:#333"></div>
<div class="a" style="left:995px;top:1128px;width:179px;height:26px;background:repeating-linear-gradient(90deg,#4a4a4a 0,#4a4a4a 11px,#3c3c3c 11px,#3c3c3c 12px)"></div>
<div class="a" style="left:995px;top:1128px;width:11px;height:26px;background:#444"></div>
<div class="a" style="left:1055px;top:1128px;width:11px;height:26px;background:#444"></div>
<div class="a" style="left:1115px;top:1128px;width:11px;height:26px;background:#444"></div>
<div class="a" style="left:347px;top:1128px;width:636px;height:26px;background:#4f4f4f;border-right:1px solid #333"></div>
<div class="a" style="left:347px;top:1128px;width:635px;height:2px;background:repeating-linear-gradient(90deg,transparent 0,transparent 11px,#5c5c5c 11px,#5c5c5c 12px)"></div>
<div class="a" style="left:349px;top:1143px;width:8px;height:7.500px;border:1.400px solid #0a0a0a;border-radius:2.500px"></div>
<div class="a" style="left:973px;top:1138px;width:7px;height:12px;border:1.500px solid #0a0a0a"></div>
<div class="a" style="left:983px;top:1128px;width:12px;height:26px;background:#4f4f4f;border-right:1px solid #333"></div>
<div class="a" style="left:985px;top:1143px;width:8px;height:7.500px;border:1.400px solid #0a0a0a;border-radius:2.500px"></div>
<div class="a" style="left:995px;top:1155px;width:179px;height:26px;background:repeating-linear-gradient(90deg,#4a4a4a 0,#4a4a4a 11px,#3c3c3c 11px,#3c3c3c 12px)"></div>
<div class="a" style="left:995px;top:1155px;width:11px;height:26px;background:#444"></div>
<div class="a" style="left:1055px;top:1155px;width:11px;height:26px;background:#444"></div>
<div class="a" style="left:1115px;top:1155px;width:11px;height:26px;background:#444"></div>
<div class="a" style="left:347px;top:1155px;width:636px;height:26px;background:#4f4f4f;border-right:1px solid #333"></div>
<div class="a" style="left:347px;top:1155px;width:635px;height:2px;background:repeating-linear-gradient(90deg,transparent 0,transparent 11px,#5c5c5c 11px,#5c5c5c 12px)"></div>
<div class="a" style="left:349px;top:1170px;width:8px;height:7.500px;border:1.400px solid #0a0a0a;border-radius:2.500px"></div>
<div class="a" style="left:973px;top:1165px;width:7px;height:12px;border:1.500px solid #0a0a0a"></div>
<div class="a" style="left:983px;top:1155px;width:12px;height:26px;background:#686868;border-right:1px solid #333;border-left:1px solid #7a7a7a"></div>
<div class="a" style="left:985px;top:1169.5px;width:7.500px;height:7.500px;border-radius:4px;background:#000"></div>
<div class="a" style="left:995px;top:1182px;width:179px;height:26px;background:repeating-linear-gradient(90deg,#4a4a4a 0,#4a4a4a 11px,#3c3c3c 11px,#3c3c3c 12px)"></div>
<div class="a" style="left:995px;top:1182px;width:11px;height:26px;background:#444"></div>
<div class="a" style="left:1055px;top:1182px;width:11px;height:26px;background:#444"></div>
<div class="a" style="left:1115px;top:1182px;width:11px;height:26px;background:#444"></div>
<div class="a" style="left:347px;top:1182px;width:504px;height:26px;background:#4f4f4f;border-right:1px solid #333"></div>
<div class="a" style="left:347px;top:1182px;width:503px;height:2px;background:repeating-linear-gradient(90deg,transparent 0,transparent 11px,#5c5c5c 11px,#5c5c5c 12px)"></div>
<div class="a" style="left:349px;top:1197px;width:8px;height:7.500px;border:1.400px solid #0a0a0a;border-radius:2.500px"></div>
<div class="a" style="left:841px;top:1192px;width:7px;height:12px;border:1.500px solid #0a0a0a"></div>
<div class="a" style="left:851px;top:1182px;width:120px;height:26px;background:#63668c;border-top:2px solid #8486a8;border-left:2px solid #8486a8;border-right:1px solid #333"></div>
<div class="a" style="left:853.5px;top:1196.5px;width:7.500px;height:7.500px;border-radius:4px;background:#000"></div>
<svg style="left:866px;top:1196px" width="98" height="10" viewBox="0 0 98 10"><path d="M0 1.500l3 3.500-3 3.500" fill="none" stroke="#000" stroke-width="1"/><path d="M2.500 5H97" stroke="#000" stroke-width="1.600"/><path d="M94 2l3.500 3-3.500 3" fill="none" stroke="#000" stroke-width="1.200"/></svg>
<div class="a" style="left:971px;top:1182px;width:12px;height:26px;background:#686868;border-right:1px solid #333;border-left:1px solid #7a7a7a"></div>
<div class="a" style="left:973px;top:1196.5px;width:7.500px;height:7.500px;border-radius:4px;background:#000"></div>
<div class="a" style="left:983px;top:1182px;width:12px;height:26px;background:#686868;border-right:1px solid #333;border-left:1px solid #7a7a7a"></div>
<div class="a" style="left:985px;top:1196.5px;width:7.500px;height:7.500px;border-radius:4px;background:#000"></div>
<div class="a" style="left:995px;top:1209px;width:179px;height:26px;background:repeating-linear-gradient(90deg,#4a4a4a 0,#4a4a4a 11px,#3c3c3c 11px,#3c3c3c 12px)"></div>
<div class="a" style="left:995px;top:1209px;width:11px;height:26px;background:#444"></div>
<div class="a" style="left:1055px;top:1209px;width:11px;height:26px;background:#444"></div>
<div class="a" style="left:1115px;top:1209px;width:11px;height:26px;background:#444"></div>
<div class="a" style="left:347px;top:1209px;width:480px;height:26px;background:#4f4f4f;border-right:1px solid #333"></div>
<div class="a" style="left:347px;top:1209px;width:479px;height:2px;background:repeating-linear-gradient(90deg,transparent 0,transparent 11px,#5c5c5c 11px,#5c5c5c 12px)"></div>
<div class="a" style="left:349px;top:1224px;width:8px;height:7.500px;border:1.400px solid #0a0a0a;border-radius:2.500px"></div>
<div class="a" style="left:817px;top:1219px;width:7px;height:12px;border:1.500px solid #0a0a0a"></div>
<div class="a" style="left:827px;top:1209px;width:120px;height:26px;background:#63668c;border-top:2px solid #8486a8;border-left:2px solid #8486a8;border-right:1px solid #333"></div>
<div class="a" style="left:829.5px;top:1223.5px;width:7.500px;height:7.500px;border-radius:4px;background:#000"></div>
<svg style="left:842px;top:1223px" width="98" height="10" viewBox="0 0 98 10"><path d="M0 1.500l3 3.500-3 3.500" fill="none" stroke="#000" stroke-width="1"/><path d="M2.500 5H97" stroke="#000" stroke-width="1.600"/><path d="M94 2l3.500 3-3.500 3" fill="none" stroke="#000" stroke-width="1.200"/></svg>
<div class="a" style="left:947px;top:1209px;width:36px;height:26px;background:#686868;border-right:1px solid #333;border-left:1px solid #7a7a7a"></div>
<div class="a" style="left:949px;top:1223.5px;width:7.500px;height:7.500px;border-radius:4px;background:#000"></div>
<div class="a" style="left:973px;top:1219px;width:7px;height:12px;border:1.500px solid #0a0a0a"></div>
<div class="a" style="left:983px;top:1209px;width:12px;height:26px;background:#686868;border-right:1px solid #333;border-left:1px solid #7a7a7a"></div>
<div class="a" style="left:985px;top:1223.5px;width:7.500px;height:7.500px;border-radius:4px;background:#000"></div>
<div class="a" style="left:995px;top:1236px;width:179px;height:26px;background:repeating-linear-gradient(90deg,#4a4a4a 0,#4a4a4a 11px,#3c3c3c 11px,#3c3c3c 12px)"></div>
<div class="a" style="left:995px;top:1236px;width:11px;height:26px;background:#444"></div>
<div class="a" style="left:1055px;top:1236px;width:11px;height:26px;background:#444"></div>
<div class="a" style="left:1115px;top:1236px;width:11px;height:26px;background:#444"></div>
<div class="a" style="left:347px;top:1236px;width:456px;height:26px;background:#4f4f4f;border-right:1px solid #333"></div>
<div class="a" style="left:347px;top:1236px;width:455px;height:2px;background:repeating-linear-gradient(90deg,transparent 0,transparent 11px,#5c5c5c 11px,#5c5c5c 12px)"></div>
<div class="a" style="left:349px;top:1251px;width:8px;height:7.500px;border:1.400px solid #0a0a0a;border-radius:2.500px"></div>
<div class="a" style="left:793px;top:1246px;width:7px;height:12px;border:1.500px solid #0a0a0a"></div>
<div class="a" style="left:803px;top:1236px;width:120px;height:26px;background:#63668c;border-top:2px solid #8486a8;border-left:2px solid #8486a8;border-right:1px solid #333"></div>
<div class="a" style="left:805.5px;top:1250.5px;width:7.500px;height:7.500px;border-radius:4px;background:#000"></div>
<svg style="left:818px;top:1250px" width="98" height="10" viewBox="0 0 98 10"><path d="M0 1.500l3 3.500-3 3.500" fill="none" stroke="#000" stroke-width="1"/><path d="M2.500 5H97" stroke="#000" stroke-width="1.600"/><path d="M94 2l3.500 3-3.500 3" fill="none" stroke="#000" stroke-width="1.200"/></svg>
<div class="a" style="left:923px;top:1236px;width:60px;height:26px;background:#686868;border-right:1px solid #333;border-left:1px solid #7a7a7a"></div>
<div class="a" style="left:925px;top:1250.5px;width:7.500px;height:7.500px;border-radius:4px;background:#000"></div>
<div class="a" style="left:973px;top:1246px;width:7px;height:12px;border:1.500px solid #0a0a0a"></div>
<div class="a" style="left:983px;top:1236px;width:12px;height:26px;background:#686868;border-right:1px solid #333;border-left:1px solid #7a7a7a"></div>
<div class="a" style="left:985px;top:1250.5px;width:7.500px;height:7.500px;border-radius:4px;background:#000"></div>
<div class="a" style="left:995px;top:1263px;width:179px;height:26px;background:repeating-linear-gradient(90deg,#4a4a4a 0,#4a4a4a 11px,#3c3c3c 11px,#3c3c3c 12px)"></div>
<div class="a" style="left:995px;top:1263px;width:11px;height:26px;background:#444"></div>
<div class="a" style="left:1055px;top:1263px;width:11px;height:26px;background:#444"></div>
<div class="a" style="left:1115px;top:1263px;width:11px;height:26px;background:#444"></div>
<div class="a" style="left:347px;top:1263px;width:432px;height:26px;background:#4f4f4f;border-right:1px solid #333"></div>
<div class="a" style="left:347px;top:1263px;width:431px;height:2px;background:repeating-linear-gradient(90deg,transparent 0,transparent 11px,#5c5c5c 11px,#5c5c5c 12px)"></div>
<div class="a" style="left:349px;top:1278px;width:8px;height:7.500px;border:1.400px solid #0a0a0a;border-radius:2.500px"></div>
<div class="a" style="left:769px;top:1273px;width:7px;height:12px;border:1.500px solid #0a0a0a"></div>
<div class="a" style="left:779px;top:1263px;width:120px;height:26px;background:#63668c;border-top:2px solid #8486a8;border-left:2px solid #8486a8;border-right:1px solid #333"></div>
<div class="a" style="left:781.5px;top:1277.5px;width:7.500px;height:7.500px;border-radius:4px;background:#000"></div>
<svg style="left:794px;top:1277px" width="98" height="10" viewBox="0 0 98 10"><path d="M0 1.500l3 3.500-3 3.500" fill="none" stroke="#000" stroke-width="1"/><path d="M2.500 5H97" stroke="#000" stroke-width="1.600"/><path d="M94 2l3.500 3-3.500 3" fill="none" stroke="#000" stroke-width="1.200"/></svg>
<div class="a" style="left:899px;top:1263px;width:84px;height:26px;background:#686868;border-right:1px solid #333;border-left:1px solid #7a7a7a"></div>
<div class="a" style="left:901px;top:1277.5px;width:7.500px;height:7.500px;border-radius:4px;background:#000"></div>
<div class="a" style="left:973px;top:1273px;width:7px;height:12px;border:1.500px solid #0a0a0a"></div>
<div class="a" style="left:983px;top:1263px;width:12px;height:26px;background:#686868;border-right:1px solid #333;border-left:1px solid #7a7a7a"></div>
<div class="a" style="left:985px;top:1277.5px;width:7.500px;height:7.500px;border-radius:4px;background:#000"></div>
<div class="a" style="left:995px;top:1290px;width:179px;height:26px;background:repeating-linear-gradient(90deg,#4a4a4a 0,#4a4a4a 11px,#3c3c3c 11px,#3c3c3c 12px)"></div>
<div class="a" style="left:995px;top:1290px;width:11px;height:26px;background:#444"></div>
<div class="a" style="left:1055px;top:1290px;width:11px;height:26px;background:#444"></div>
<div class="a" style="left:1115px;top:1290px;width:11px;height:26px;background:#444"></div>
<div class="a" style="left:347px;top:1290px;width:408px;height:26px;background:#4f4f4f;border-right:1px solid #333"></div>
<div class="a" style="left:347px;top:1290px;width:407px;height:2px;background:repeating-linear-gradient(90deg,transparent 0,transparent 11px,#5c5c5c 11px,#5c5c5c 12px)"></div>
<div class="a" style="left:349px;top:1305px;width:8px;height:7.500px;border:1.400px solid #0a0a0a;border-radius:2.500px"></div>
<div class="a" style="left:745px;top:1300px;width:7px;height:12px;border:1.500px solid #0a0a0a"></div>
<div class="a" style="left:755px;top:1290px;width:120px;height:26px;background:#63668c;border-top:2px solid #8486a8;border-left:2px solid #8486a8;border-right:1px solid #333"></div>
<div class="a" style="left:757.5px;top:1304.5px;width:7.500px;height:7.500px;border-radius:4px;background:#000"></div>
<svg style="left:770px;top:1304px" width="98" height="10" viewBox="0 0 98 10"><path d="M0 1.500l3 3.500-3 3.500" fill="none" stroke="#000" stroke-width="1"/><path d="M2.500 5H97" stroke="#000" stroke-width="1.600"/><path d="M94 2l3.500 3-3.500 3" fill="none" stroke="#000" stroke-width="1.200"/></svg>
<div class="a" style="left:875px;top:1290px;width:108px;height:26px;background:#686868;border-right:1px solid #333;border-left:1px solid #7a7a7a"></div>
<div class="a" style="left:877px;top:1304.5px;width:7.500px;height:7.500px;border-radius:4px;background:#000"></div>
<div class="a" style="left:973px;top:1300px;width:7px;height:12px;border:1.500px solid #0a0a0a"></div>
<div class="a" style="left:983px;top:1290px;width:12px;height:26px;background:#686868;border-right:1px solid #333;border-left:1px solid #7a7a7a"></div>
<div class="a" style="left:985px;top:1304.5px;width:7.500px;height:7.500px;border-radius:4px;background:#000"></div>
<div class="a" style="left:995px;top:1317px;width:179px;height:23px;background:repeating-linear-gradient(90deg,#4a4a4a 0,#4a4a4a 11px,#3c3c3c 11px,#3c3c3c 12px)"></div>
<div class="a" style="left:995px;top:1317px;width:11px;height:23px;background:#444"></div>
<div class="a" style="left:1055px;top:1317px;width:11px;height:23px;background:#444"></div>
<div class="a" style="left:1115px;top:1317px;width:11px;height:23px;background:#444"></div>
<div class="a" style="left:347px;top:1317px;width:120px;height:23px;background:#4f4f4f;border-right:1px solid #333"></div>
<div class="a" style="left:347px;top:1317px;width:119px;height:2px;background:repeating-linear-gradient(90deg,transparent 0,transparent 11px,#5c5c5c 11px,#5c5c5c 12px)"></div>
<div class="a" style="left:349px;top:1332px;width:8px;height:7.500px;border:1.400px solid #0a0a0a;border-radius:2.500px"></div>
<div class="a" style="left:457px;top:1327px;width:7px;height:12px;border:1.500px solid #0a0a0a"></div>
<div class="a" style="left:467px;top:1317px;width:288px;height:23px;background:#63668c;border-top:2px solid #8486a8;border-left:2px solid #8486a8;border-right:1px solid #333"></div>
<div class="a" style="left:469.5px;top:1331.5px;width:7.500px;height:7.500px;border-radius:4px;background:#000"></div>
<svg style="left:482px;top:1331px" width="266" height="10" viewBox="0 0 266 10"><path d="M0 1.500l3 3.500-3 3.500" fill="none" stroke="#000" stroke-width="1"/><path d="M2.500 5H265" stroke="#000" stroke-width="1.600"/><path d="M262 2l3.500 3-3.500 3" fill="none" stroke="#000" stroke-width="1.200"/></svg>
<div class="a" style="left:755px;top:1317px;width:228px;height:23px;background:#686868;border-right:1px solid #333;border-left:1px solid #7a7a7a"></div>
<div class="a" style="left:757px;top:1331.5px;width:7.500px;height:7.500px;border-radius:4px;background:#000"></div>
<div class="a" style="left:973px;top:1327px;width:7px;height:12px;border:1.500px solid #0a0a0a"></div>
<div class="a" style="left:983px;top:1317px;width:12px;height:23px;background:#4f4f4f;border-right:1px solid #333"></div>
<div class="a" style="left:985px;top:1332px;width:8px;height:7.500px;border:1.400px solid #0a0a0a;border-radius:2.500px"></div>
<div class="t" style="left:985px;top:1128px;font-size:11px;color:#eee;font-weight:bold">a</div>
<div class="a" style="left:861.5px;top:1080px;width:14px;height:45px;background:#712c2c;border:1.500px solid #c01c1c;border-radius:1px"></div>
<div class="a" style="left:867.8px;top:1125px;width:1.300px;height:213px;background:#bf1515"></div>
<div class="a" style="left:8px;top:1339px;width:1166px;height:1px;background:#5a5a5a"></div>
<div class="a" style="left:8px;top:1340px;width:1166px;height:34px;background:#474747"></div>
<div class="a" style="left:8px;top:1374px;width:1166px;height:5px;background:#3a3a3a;border-top:1px solid #222"></div>
<div class="a" style="left:23px;top:1349px;width:16px;height:16px"><div style="transform:scale(.86);transform-origin:0 0;position:absolute;left:0;top:0"><svg style="left:0px;top:0px" width="18" height="18" viewBox="0 0 18 18"><defs><linearGradient id="lgnb" x1="0" y1="0" x2="0" y2="1"><stop offset="0" stop-color="#d8d8d8"/><stop offset="1" stop-color="#a8a8a8"/></linearGradient></defs>
<path d="M0 0h18v1.500H0z" fill="#2e2e2e"/><path d="M0 1.500h18V18H7.500v-6H0z" fill="url(#lgnb)"/><path d="M0.500 12.500h6.500v5.500z" fill="#d8d8d8"/><path d="M7 12v6" stroke="#2e2e2e" stroke-width="1.200"/><path d="M0 12h7" stroke="#2e2e2e" stroke-width=".8"/></svg></div></div>
<svg style="left:52px;top:1351px" width="18" height="15" viewBox="0 0 19 16"><path d="M0 3a2 2 0 0 1 2-2h5l2 2.500h8a2 2 0 0 1 2 2v8.500a2 2 0 0 1-2 2H2a2 2 0 0 1-2-2z" fill="#cdcdcd"/></svg>
<svg style="left:85px;top:1349px" width="16" height="17" viewBox="0 0 18 20"><path d="M5.500 3.500a3.500 3 0 0 1 7 0" fill="none" stroke="#cdcdcd" stroke-width="1.600"/><rect x="0" y="4" width="18" height="3" rx="1" fill="#cdcdcd"/><path d="M2 8.500h14l-1.200 11H3.200z" fill="#cdcdcd"/><path d="M5.500 10v8M9 10v8M12.500 10v8" stroke="#474747" stroke-width="1.400"/></svg>
<svg style="left:292px;top:1350.500px" width="18.500" height="12.500" viewBox="0 0 20 14"><rect x="0" y="0.500" width="12" height="13" rx="2" fill="#cdcdcd"/><path d="M10.500 7L20 .5v13z" fill="#cdcdcd"/></svg>
<div class="a" style="left:329px;top:1347px;width:8px;height:16px;background:repeating-linear-gradient(90deg,#cdcdcd 0,#cdcdcd 1.500px,transparent 1.500px,transparent 3.200px)"></div>
<svg style="left:359px;top:1348.500px" width="16" height="12" viewBox="0 0 16 12"><rect x="0" y="0" width="2.400" height="12" fill="#cdcdcd"/><path d="M16 0v12L4 6z" fill="#cdcdcd"/></svg>
<svg style="left:386px;top:1348.500px" width="17" height="12" viewBox="0 0 17 12"><rect x="14.600" y="0" width="2.400" height="12" fill="#cdcdcd"/><path d="M12.500 0v12L0 6z" fill="#cdcdcd"/></svg>
<svg style="left:414.500px;top:1347.800px" width="13.500" height="14" viewBox="0 0 13.500 14"><path d="M0 0l13.500 7L0 14z" fill="#cdcdcd"/></svg>
<svg style="left:440px;top:1348.500px" width="17" height="12" viewBox="0 0 17 12"><rect x="0" y="0" width="2.400" height="12" fill="#cdcdcd"/><path d="M4.500 0v12l12.500-6z" fill="#cdcdcd"/></svg>
<svg style="left:468px;top:1348.500px" width="16.500" height="12" viewBox="0 0 16.500 12"><rect x="14.100" y="0" width="2.400" height="12" fill="#cdcdcd"/><path d="M0 0v12l12.500-6z" fill="#cdcdcd"/></svg>
<div class="a" style="left:497px;top:1343px;width:1px;height:28px;background:#3a3a3a"></div>
<div class="a" style="left:572px;top:1343px;width:1px;height:28px;background:#3a3a3a"></div>
<div class="a" style="left:697px;top:1343px;width:1px;height:28px;background:#3a3a3a"></div>
<svg style="left:510px;top:1346px" width="18" height="18" viewBox="0 0 18 18"><rect x="0" y="6" width="18" height="6" fill="#cdcdcd"/><rect x="7.800" y="0" width="2.400" height="18" fill="#cdcdcd"/><rect x="2" y="8" width="14" height="2" fill="#474747"/><rect x="7.800" y="6" width="2.400" height="6" fill="#cdcdcd"/></svg>
<svg style="left:540px;top:1347px" width="20" height="18" viewBox="0 0 20 18"><path d="M1.500 17V8.500h12" fill="none" stroke="#cdcdcd" stroke-width="3"/><path d="M12 2l8 6.500-8 6.500z" fill="#cdcdcd"/><path d="M0 17h20" stroke="#cdcdcd" stroke-width="2.400"/></svg>
<svg style="left:585px;top:1346px" width="18" height="19" viewBox="0 0 18 19"><path d="M0 0h8v6H0z" fill="none" stroke="#cdcdcd" stroke-width="1.500" stroke-dasharray="1.500 1.500"/><rect x="5" y="6" width="13" height="13" fill="#cdcdcd"/></svg>
<svg style="left:612px;top:1346px" width="18" height="19" viewBox="0 0 18 19"><rect x="1" y="1" width="9" height="9" fill="none" stroke="#cdcdcd" stroke-width="2"/><rect x="6" y="6" width="10" height="11" fill="#474747" stroke="#cdcdcd" stroke-width="2"/></svg>
<svg style="left:640px;top:1346px" width="15" height="20" viewBox="0 0 15 20"><rect x="0" y="1" width="7" height="14" fill="#cdcdcd"/><rect x="7" y="4" width="7" height="15" fill="#9a9a9a"/><circle cx="10.500" cy="15.500" r="1.600" fill="#2a2a2a"/><path d="M0 15l3 4v-4z" fill="#cdcdcd"/></svg>
<svg style="left:665px;top:1346px" width="20" height="20" viewBox="0 0 20 20"><path d="M5 1H1v16h4M11 1h4v8" fill="none" stroke="#cdcdcd" stroke-width="2"/><circle cx="8" cy="9" r="1.800" fill="#cdcdcd"/><path d="M10 14h9l-4.500 5z" fill="#cdcdcd"/></svg>
<div class="t" style="left:710px;top:1348px;font-size:13.500px;color:#d6a019;border-bottom:1px dotted #d6a019;padding-bottom:2px">44</div>
<div class="t" style="left:759px;top:1348px;font-size:13.500px;color:#6c6c6c"><span style="border-bottom:1px dotted #6c6c6c;padding-bottom:2px">30.00</span> fps</div>
<div class="t" style="left:833px;top:1348px;font-size:13.500px;color:#dcdcdc"><span style="border-bottom:1px dotted #d6a019;padding-bottom:2px;color:#d6a019">1.4</span> s</div>
<div class="a" style="left:881px;top:1345px;width:293px;height:21px;background:#3a3a3a;border:1px solid #262626"></div>
<div class="a" style="left:882px;top:1346px;width:22px;height:19px;background:#474747"></div>
<div class="a" style="left:888px;top:1350px;width:0;height:0;border:5.500px solid transparent;border-right:8px solid #d8d8d8;border-left:none"></div>
<div class="a" style="left:905px;top:1346px;width:198px;height:19px;background:#4c4c4c;border:1px solid #5c5c5c"></div>
<div class="a" style="left:1174px;top:764px;width:990px;height:620px;background:#474747;border:1px solid #262626;border-radius:5px 0 0 0"></div>
<div class="a" style="left:1175px;top:765px;width:986px;height:20px;background:linear-gradient(#303030,#282828);border-radius:4px 0 0 0;border-top:1px solid #444"></div>
<div class="a" style="left:1175px;top:785px;width:986px;height:27px;background:#2f2f2f;border-top:1px solid #222"></div>
<div class="a" style="left:1175px;top:786px;width:55px;height:26px;background:#474747"></div>
<div class="t" style="left:1186px;top:789.500px;font-size:16px;font-weight:bold;color:#ececec">动作</div>
<div class="a" style="left:1174px;top:770px;width:3.500px;height:612px;background:#222"></div>
<div class="a" style="left:1177px;top:812px;width:470px;height:570px;background:#424242;border:1px solid #2b2b2b"></div>
<div class="a" style="left:1647px;top:812px;width:11px;height:570px;background:linear-gradient(90deg,#3a3a3a,#585858 80%,#333 85%,#333)"></div>
<div class="a" style="left:1185px;top:821.0px;width:0;height:0;border:6px solid transparent;border-left:9px solid #c8c8c8;border-right:none"></div>
<svg style="left:1209px;top:816px" width="18" height="21" viewBox="0 0 18 21"><defs><linearGradient id="dg" x1="0" y1="0" x2="0" y2="1"><stop offset="0" stop-color="#e8e8e8"/><stop offset="1" stop-color="#a0a0a0"/></linearGradient></defs><path d="M0 0h11l7 7v14H0z" fill="url(#dg)"/><path d="M11 0v7h7z" fill="#6a6a6a"/></svg>
<div class="t" style="left:1241px;top:820px;font-size:17px;color:#d6d6d6;letter-spacing:.3px"><span style="letter-spacing:1.800px">全局</span></div>
<div class="a" style="left:1184px;top:852.5px;width:0;height:0;border:6px solid transparent;border-top:9px solid #c8c8c8;border-bottom:none"></div>
<svg style="left:1209px;top:844px" width="22" height="20" viewBox="0 0 24 22"><defs><linearGradient id="cat" x1="0" y1="0" x2="0" y2="1"><stop offset="0" stop-color="#e4e4e4"/><stop offset="1" stop-color="#9c9c9c"/></linearGradient></defs>
<path d="M1 11h22v9.500a1.500 1.500 0 0 1-1.500 1.500h-19a1.500 1.500 0 0 1-1.500-1.500z" fill="url(#cat)"/><path d="M1 8h22v3H1z" fill="#e8e8e8"/><path d="M4 8l2 3h3l-2-3zM10 8l2 3h3l-2-3zM16 8l2 3h3l-2-3z" fill="#333"/><path d="M0.500 5.500L20 0l1 3L1.500 8.500z" fill="#e8e8e8"/><path d="M4 4.500l3.500 2 2.800-.8-3.500-2zM10 2.800l3.500 2 2.800-.8-3.500-2zM16 1.200l3 1.800 1.800-.5-.5-1.800-1.500-.3z" fill="#333"/></svg>
<div class="t" style="left:1241px;top:848px;font-size:17px;color:#d6d6d6;letter-spacing:.3px"><span style="letter-spacing:1.800px">场景</span> 1</div>
<svg style="left:1245px;top:873px" width="9" height="21" viewBox="0 0 10 21" preserveAspectRatio="none"><defs><linearGradient id="fi2" x1="0" y1="0" x2="0" y2="1"><stop offset="0" stop-color="#e6e6e6"/><stop offset="1" stop-color="#a4a4a4"/></linearGradient></defs><rect x="0" y="0" width="10" height="1.500" fill="#222"/><rect x="0" y="1.500" width="10" height="19.500" fill="url(#fi2)"/><circle cx="5" cy="15" r="3.200" fill="#1c1c1c"/></svg>
<div class="t" style="left:1270px;top:877px;font-size:17px;color:#d6d6d6;letter-spacing:.3px"><span style="word-spacing:.5px"><span style="letter-spacing:-.4px">Actions</span> : <span style="letter-spacing:1px">第</span> 54 <span style="margin-left:1px">帧</span></span></div>
<div class="a" style="left:1184px;top:909.5px;width:0;height:0;border:6px solid transparent;border-top:9px solid #c8c8c8;border-bottom:none"></div>
<svg style="left:1210px;top:902px" width="22" height="22" viewBox="0 0 22 22"><g fill="#cfcfcf"><circle cx="11" cy="6" r="5.500"/><circle cx="5.500" cy="13" r="5.500"/><circle cx="16.500" cy="13" r="5.500"/><path d="M9.500 10h3l1.500 11h-6z"/><rect x="5" y="19.500" width="12" height="2.500"/></g></svg>
<div class="t" style="left:1241px;top:906px;font-size:17px;color:#d6d6d6;letter-spacing:.3px"><span style="letter-spacing:1.800px">元件定义</span></div>
<div class="a" style="left:1214px;top:938.0px;width:0;height:0;border:6px solid transparent;border-top:9px solid #c8c8c8;border-bottom:none"></div>
<svg style="left:1239px;top:930px" width="21" height="22" viewBox="0 0 22 22" preserveAspectRatio="none"><defs><linearGradient id="si4" x1="0" y1="0" x2="0" y2="1"><stop offset="0" stop-color="#e0e0e0"/><stop offset="1" stop-color="#9c9c9c"/></linearGradient><clipPath id="sc4"><rect x="0" y="0" width="22" height="22"/></clipPath></defs><rect x="0" y="0" width="22" height="22" fill="url(#si4)"/><g clip-path="url(#sc4)"><g transform="translate(14.500,7.500) rotate(12)"><circle r="7.200" fill="#222"/><g stroke="#222" stroke-width="4.200"><path d="M0 -11V11M-11 0H11M-7.800 -7.800L7.800 7.800M-7.800 7.800L7.800 -7.800"/></g><circle r="3.600" fill="#d0d0d0"/></g></g></svg>
<div class="t" style="left:1271px;top:934px;font-size:17px;color:#d6d6d6;letter-spacing:.3px"><span style="letter-spacing:1.800px">选项：帆船</span></div>
<svg style="left:1275px;top:958px" width="9" height="21" viewBox="0 0 10 21" preserveAspectRatio="none"><defs><linearGradient id="fi5" x1="0" y1="0" x2="0" y2="1"><stop offset="0" stop-color="#e6e6e6"/><stop offset="1" stop-color="#a4a4a4"/></linearGradient></defs><rect x="0" y="0" width="10" height="1.500" fill="#222"/><rect x="0" y="1.500" width="10" height="19.500" fill="url(#fi5)"/><circle cx="5" cy="15" r="3.200" fill="#1c1c1c"/></svg>
<div class="t" style="left:1300px;top:962px;font-size:17px;color:#d6d6d6;letter-spacing:.3px"><span style="word-spacing:.5px"><span style="letter-spacing:-.4px">Actions</span> : <span style="letter-spacing:1px">第</span> 1 <span style="margin-left:1px">帧</span></span></div>
<svg style="left:1275px;top:987px" width="9" height="21" viewBox="0 0 10 21" preserveAspectRatio="none"><defs><linearGradient id="fi6" x1="0" y1="0" x2="0" y2="1"><stop offset="0" stop-color="#e6e6e6"/><stop offset="1" stop-color="#a4a4a4"/></linearGradient></defs><rect x="0" y="0" width="10" height="1.500" fill="#222"/><rect x="0" y="1.500" width="10" height="19.500" fill="url(#fi6)"/><circle cx="5" cy="15" r="3.200" fill="#1c1c1c"/></svg>
<div class="t" style="left:1300px;top:991px;font-size:17px;color:#d6d6d6;letter-spacing:.3px"><span style="word-spacing:.5px"><span style="letter-spacing:-.4px">Actions</span> : <span style="letter-spacing:1px">第</span> 21 <span style="margin-left:1px">帧</span></span></div>
<div class="a" style="left:1214px;top:1023.5px;width:0;height:0;border:6px solid transparent;border-top:9px solid #c8c8c8;border-bottom:none"></div>
<svg style="left:1239px;top:1016px" width="21" height="22" viewBox="0 0 22 22" preserveAspectRatio="none"><defs><linearGradient id="si7" x1="0" y1="0" x2="0" y2="1"><stop offset="0" stop-color="#e0e0e0"/><stop offset="1" stop-color="#9c9c9c"/></linearGradient><clipPath id="sc7"><rect x="0" y="0" width="22" height="22"/></clipPath></defs><rect x="0" y="0" width="22" height="22" fill="url(#si7)"/><g clip-path="url(#sc7)"><g transform="translate(14.500,7.500) rotate(12)"><circle r="7.200" fill="#222"/><g stroke="#222" stroke-width="4.200"><path d="M0 -11V11M-11 0H11M-7.800 -7.800L7.800 7.800M-7.800 7.800L7.800 -7.800"/></g><circle r="3.600" fill="#d0d0d0"/></g></g></svg>
<div class="t" style="left:1271px;top:1020px;font-size:17px;color:#d6d6d6;letter-spacing:.3px"><span style="letter-spacing:1.800px">选项：书签</span></div>
<svg style="left:1275px;top:1044px" width="9" height="21" viewBox="0 0 10 21" preserveAspectRatio="none"><defs><linearGradient id="fi8" x1="0" y1="0" x2="0" y2="1"><stop offset="0" stop-color="#e6e6e6"/><stop offset="1" stop-color="#a4a4a4"/></linearGradient></defs><rect x="0" y="0" width="10" height="1.500" fill="#222"/><rect x="0" y="1.500" width="10" height="19.500" fill="url(#fi8)"/><circle cx="5" cy="15" r="3.200" fill="#1c1c1c"/></svg>
<div class="t" style="left:1300px;top:1048px;font-size:17px;color:#d6d6d6;letter-spacing:.3px"><span style="word-spacing:.5px"><span style="letter-spacing:-.4px">Actions</span> : <span style="letter-spacing:1px">第</span> 1 <span style="margin-left:1px">帧</span></span></div>
<svg style="left:1275px;top:1072px" width="9" height="21" viewBox="0 0 10 21" preserveAspectRatio="none"><defs><linearGradient id="fi9" x1="0" y1="0" x2="0" y2="1"><stop offset="0" stop-color="#e6e6e6"/><stop offset="1" stop-color="#a4a4a4"/></linearGradient></defs><rect x="0" y="0" width="10" height="1.500" fill="#222"/><rect x="0" y="1.500" width="10" height="19.500" fill="url(#fi9)"/><circle cx="5" cy="15" r="3.200" fill="#1c1c1c"/></svg>
<div class="t" style="left:1300px;top:1076px;font-size:17px;color:#d6d6d6;letter-spacing:.3px"><span style="word-spacing:.5px"><span style="letter-spacing:-.4px">Actions</span> : <span style="letter-spacing:1px">第</span> 23 <span style="margin-left:1px">帧</span></span></div>
<div class="a" style="left:1214px;top:1109.0px;width:0;height:0;border:6px solid transparent;border-top:9px solid #c8c8c8;border-bottom:none"></div>
<svg style="left:1239px;top:1101px" width="21" height="22" viewBox="0 0 22 22" preserveAspectRatio="none"><defs><linearGradient id="si10" x1="0" y1="0" x2="0" y2="1"><stop offset="0" stop-color="#e0e0e0"/><stop offset="1" stop-color="#9c9c9c"/></linearGradient><clipPath id="sc10"><rect x="0" y="0" width="22" height="22"/></clipPath></defs><rect x="0" y="0" width="22" height="22" fill="url(#si10)"/><g clip-path="url(#sc10)"><g transform="translate(14.500,7.500) rotate(12)"><circle r="7.200" fill="#222"/><g stroke="#222" stroke-width="4.200"><path d="M0 -11V11M-11 0H11M-7.800 -7.800L7.800 7.800M-7.800 7.800L7.800 -7.800"/></g><circle r="3.600" fill="#d0d0d0"/></g></g></svg>
<div class="t" style="left:1271px;top:1105px;font-size:17px;color:#d6d6d6;letter-spacing:.3px"><span style="letter-spacing:1.800px">选项：购物车</span></div>
<svg style="left:1275px;top:1130px" width="9" height="21" viewBox="0 0 10 21" preserveAspectRatio="none"><defs><linearGradient id="fi11" x1="0" y1="0" x2="0" y2="1"><stop offset="0" stop-color="#e6e6e6"/><stop offset="1" stop-color="#a4a4a4"/></linearGradient></defs><rect x="0" y="0" width="10" height="1.500" fill="#222"/><rect x="0" y="1.500" width="10" height="19.500" fill="url(#fi11)"/><circle cx="5" cy="15" r="3.200" fill="#1c1c1c"/></svg>
<div class="t" style="left:1300px;top:1134px;font-size:17px;color:#d6d6d6;letter-spacing:.3px"><span style="word-spacing:.5px"><span style="letter-spacing:-.4px">Actions</span> : <span style="letter-spacing:1px">第</span> 1 <span style="margin-left:1px">帧</span></span></div>
<svg style="left:1275px;top:1158px" width="9" height="21" viewBox="0 0 10 21" preserveAspectRatio="none"><defs><linearGradient id="fi12" x1="0" y1="0" x2="0" y2="1"><stop offset="0" stop-color="#e6e6e6"/><stop offset="1" stop-color="#a4a4a4"/></linearGradient></defs><rect x="0" y="0" width="10" height="1.500" fill="#222"/><rect x="0" y="1.500" width="10" height="19.500" fill="url(#fi12)"/><circle cx="5" cy="15" r="3.200" fill="#1c1c1c"/></svg>
<div class="t" style="left:1300px;top:1162px;font-size:17px;color:#d6d6d6;letter-spacing:.3px"><span style="word-spacing:.5px"><span style="letter-spacing:-.4px">Actions</span> : <span style="letter-spacing:1px">第</span> 23 <span style="margin-left:1px">帧</span></span></div>
<div class="a" style="left:1214px;top:1194.5px;width:0;height:0;border:6px solid transparent;border-top:9px solid #c8c8c8;border-bottom:none"></div>
<svg style="left:1239px;top:1186px" width="21" height="22" viewBox="0 0 22 22" preserveAspectRatio="none"><defs><linearGradient id="si13" x1="0" y1="0" x2="0" y2="1"><stop offset="0" stop-color="#e0e0e0"/><stop offset="1" stop-color="#9c9c9c"/></linearGradient><clipPath id="sc13"><rect x="0" y="0" width="22" height="22"/></clipPath></defs><rect x="0" y="0" width="22" height="22" fill="url(#si13)"/><g clip-path="url(#sc13)"><g transform="translate(14.500,7.500) rotate(12)"><circle r="7.200" fill="#222"/><g stroke="#222" stroke-width="4.200"><path d="M0 -11V11M-11 0H11M-7.800 -7.800L7.800 7.800M-7.800 7.800L7.800 -7.800"/></g><circle r="3.600" fill="#d0d0d0"/></g></g></svg>
<div class="t" style="left:1271px;top:1190px;font-size:17px;color:#d6d6d6;letter-spacing:.3px"><span style="letter-spacing:1.800px">选项：齿轮</span>-<span style="letter-spacing:1.800px">系统</span></div>
<svg style="left:1275px;top:1215px" width="9" height="21" viewBox="0 0 10 21" preserveAspectRatio="none"><defs><linearGradient id="fi14" x1="0" y1="0" x2="0" y2="1"><stop offset="0" stop-color="#e6e6e6"/><stop offset="1" stop-color="#a4a4a4"/></linearGradient></defs><rect x="0" y="0" width="10" height="1.500" fill="#222"/><rect x="0" y="1.500" width="10" height="19.500" fill="url(#fi14)"/><circle cx="5" cy="15" r="3.200" fill="#1c1c1c"/></svg>
<div class="t" style="left:1300px;top:1219px;font-size:17px;color:#d6d6d6;letter-spacing:.3px"><span style="word-spacing:.5px"><span style="letter-spacing:-.4px">Actions</span> : <span style="letter-spacing:1px">第</span> 1 <span style="margin-left:1px">帧</span></span></div>
<svg style="left:1275px;top:1244px" width="9" height="21" viewBox="0 0 10 21" preserveAspectRatio="none"><defs><linearGradient id="fi15" x1="0" y1="0" x2="0" y2="1"><stop offset="0" stop-color="#e6e6e6"/><stop offset="1" stop-color="#a4a4a4"/></linearGradient></defs><rect x="0" y="0" width="10" height="1.500" fill="#222"/><rect x="0" y="1.500" width="10" height="19.500" fill="url(#fi15)"/><circle cx="5" cy="15" r="3.200" fill="#1c1c1c"/></svg>
<div class="t" style="left:1300px;top:1248px;font-size:17px;color:#d6d6d6;letter-spacing:.3px"><span style="word-spacing:.5px"><span style="letter-spacing:-.4px">Actions</span> : <span style="letter-spacing:1px">第</span> 23 <span style="margin-left:1px">帧</span></span></div>
<div class="a" style="left:1214px;top:1280.0px;width:0;height:0;border:6px solid transparent;border-top:9px solid #c8c8c8;border-bottom:none"></div>
<svg style="left:1239px;top:1272px" width="21" height="22" viewBox="0 0 22 22" preserveAspectRatio="none"><defs><linearGradient id="si16" x1="0" y1="0" x2="0" y2="1"><stop offset="0" stop-color="#e0e0e0"/><stop offset="1" stop-color="#9c9c9c"/></linearGradient><clipPath id="sc16"><rect x="0" y="0" width="22" height="22"/></clipPath></defs><rect x="0" y="0" width="22" height="22" fill="url(#si16)"/><g clip-path="url(#sc16)"><g transform="translate(14.500,7.500) rotate(12)"><circle r="7.200" fill="#222"/><g stroke="#222" stroke-width="4.200"><path d="M0 -11V11M-11 0H11M-7.800 -7.800L7.800 7.800M-7.800 7.800L7.800 -7.800"/></g><circle r="3.600" fill="#d0d0d0"/></g></g></svg>
<div class="t" style="left:1271px;top:1276px;font-size:17px;color:#d6d6d6;letter-spacing:.3px"><span style="letter-spacing:1.800px">选项：飞机</span></div>
<svg style="left:1275px;top:1300px" width="9" height="21" viewBox="0 0 10 21" preserveAspectRatio="none"><defs><linearGradient id="fi17" x1="0" y1="0" x2="0" y2="1"><stop offset="0" stop-color="#e6e6e6"/><stop offset="1" stop-color="#a4a4a4"/></linearGradient></defs><rect x="0" y="0" width="10" height="1.500" fill="#222"/><rect x="0" y="1.500" width="10" height="19.500" fill="url(#fi17)"/><circle cx="5" cy="15" r="3.200" fill="#1c1c1c"/></svg>
<div class="t" style="left:1300px;top:1304px;font-size:17px;color:#d6d6d6;letter-spacing:.3px"><span style="word-spacing:.5px"><span style="letter-spacing:-.4px">Actions</span> : <span style="letter-spacing:1px">第</span> 1 <span style="margin-left:1px">帧</span></span></div>
<svg style="left:1275px;top:1329px" width="9" height="21" viewBox="0 0 10 21" preserveAspectRatio="none"><defs><linearGradient id="fi18" x1="0" y1="0" x2="0" y2="1"><stop offset="0" stop-color="#e6e6e6"/><stop offset="1" stop-color="#a4a4a4"/></linearGradient></defs><rect x="0" y="0" width="10" height="1.500" fill="#222"/><rect x="0" y="1.500" width="10" height="19.500" fill="url(#fi18)"/><circle cx="5" cy="15" r="3.200" fill="#1c1c1c"/></svg>
<div class="t" style="left:1300px;top:1333px;font-size:17px;color:#d6d6d6;letter-spacing:.3px"><span style="word-spacing:.5px"><span style="letter-spacing:-.4px">Actions</span> : <span style="letter-spacing:1px">第</span> 23 <span style="margin-left:1px">帧</span></span></div>
<div class="a" style="left:1658px;top:812px;width:505px;height:30px;background:#0c0c0c"></div>
<div class="a" style="left:1658px;top:814px;width:96px;height:29px;background:#474747;border-top:1px solid #5a5a5a"></div>
<div class="t" style="left:1676px;top:821px;font-size:16px;color:#d8d8d8;letter-spacing:2.200px">当前帧</div>
<div class="a" style="left:1658px;top:843px;width:505px;height:44px;background:#474747"></div>
<div class="a" style="left:1658px;top:884px;width:505px;height:3px;background:#333"></div>
<div class="t" style="left:1676px;top:859px;font-size:17px;color:#dcdcdc;letter-spacing:-.2px">Actions:1</div>
<div class="a" style="left:1659px;top:887px;width:504px;height:495px;background:#fff"></div>
<div class="a" style="left:1659px;top:887px;width:40px;height:495px;background:#f0f0f0"></div>
<div class="a" style="left:1699px;top:887px;width:16px;height:495px;background:#f8f8f8"></div>
<div class="t" style="left:1671px;top:889px;font-size:18px;color:#707070;font-family:'Liberation Serif',serif">1</div>
<div class="a" style="left:1693px;top:114px;width:470px;height:22px;background:linear-gradient(#2e2e2e,#202020);border:1px solid #1c1c1c;border-top:1px solid #484848;border-radius:5px 0 0 0"></div>
<svg style="left:1733px;top:121px" width="12" height="9" viewBox="0 0 12 9"><path d="M1 1l3.500 3.500L1 8M7 1l3.500 3.500L7 8" fill="none" stroke="#dcdcdc" stroke-width="1.300"/></svg>
<svg style="left:1793px;top:121px" width="12" height="9" viewBox="0 0 12 9"><path d="M1 1l3.500 3.500L1 8M7 1l3.500 3.500L7 8" fill="none" stroke="#dcdcdc" stroke-width="1.300"/></svg>
<div class="a" style="left:1693px;top:135px;width:60px;height:146px;background:#464646;border:1px solid #2c2c2c;box-shadow:inset 1px 0 0 #555"></div>
<div class="a" style="left:1754px;top:135px;width:60px;height:62px;background:#464646;border:1px solid #2c2c2c;box-shadow:inset 1px 0 0 #555"></div>
<div class="a" style="left:1708px;top:141px;width:29px;height:6px;background:repeating-linear-gradient(90deg,#1e1e1e 0,#1e1e1e 1.500px,transparent 1.500px,transparent 3px)"></div>
<div class="a" style="left:1768px;top:141px;width:29px;height:6px;background:repeating-linear-gradient(90deg,#1e1e1e 0,#1e1e1e 1.500px,transparent 1.500px,transparent 3px)"></div>
<svg style="left:1713.5px;top:160.0px" width="23" height="22" viewBox="0 0 23 22"><defs><linearGradient id="al" x1="0" y1="0" x2="0" y2="1"><stop offset="0" stop-color="#e6e6e6"/><stop offset="1" stop-color="#a6a6a6"/></linearGradient></defs><rect x="0" y="0" width="2" height="22" fill="#d8d8d8"/><rect x="3.500" y="2" width="13" height="7" fill="url(#al)"/><rect x="3.500" y="12" width="19" height="7" fill="url(#al)"/></svg>
<svg style="left:1711.5px;top:199.5px" width="27" height="27" viewBox="0 0 27 27"><defs><linearGradient id="inf" x1="0" y1="0" x2="0" y2="1"><stop offset="0" stop-color="#e6e6e6"/><stop offset="1" stop-color="#a6a6a6"/></linearGradient></defs><circle cx="13.500" cy="13.500" r="13" fill="url(#inf)"/><circle cx="13.500" cy="7" r="2.500" fill="#333"/><path d="M10.500 11h5v9h2v2.500h-8V20h2v-6.500h-1z" fill="#333"/></svg>
<svg style="left:1713.5px;top:243.5px" width="23" height="23" viewBox="0 0 23 23"><rect x="2.500" y="2.500" width="18" height="18" fill="none" stroke="#cfcfcf" stroke-width="1.600"/><rect x="0" y="0" width="5" height="5" fill="#cfcfcf"/><rect x="0" y="9" width="5" height="5" fill="#cfcfcf"/><rect x="0" y="18" width="5" height="5" fill="#cfcfcf"/><rect x="9" y="0" width="5" height="5" fill="#cfcfcf"/><rect x="9" y="18" width="5" height="5" fill="#cfcfcf"/><rect x="18" y="0" width="5" height="5" fill="#cfcfcf"/><rect x="18" y="9" width="5" height="5" fill="#cfcfcf"/><rect x="18" y="18" width="5" height="5" fill="#cfcfcf"/><rect x="10.500" y="10.500" width="2" height="2" fill="#cfcfcf"/></svg>
<svg style="left:1770.0px;top:159.5px" width="31" height="24" viewBox="0 0 31 24"><defs><linearGradient id="pal" x1="0" y1="0" x2="0" y2="1"><stop offset="0" stop-color="#e6e6e6"/><stop offset="1" stop-color="#a6a6a6"/></linearGradient></defs><path d="M12.500 1.500C5 2.500 0 8 1 14C2 20.500 9 23.500 16 23.500C24 23.500 30.500 19 30.500 12C30.500 5.500 24 .5 17 .5C15 .5 14.500 1.500 14.800 3C15.200 4.800 14 6 12.500 5.500C10.500 4.800 10.500 2.500 12.500 1.500z" fill="url(#pal)"/><circle cx="6.900" cy="12.500" r="2.100" fill="#4a4a4a"/><circle cx="13.200" cy="16.500" r="2.100" fill="#4a4a4a"/><circle cx="20.100" cy="16.500" r="2.100" fill="#4a4a4a"/><circle cx="25.700" cy="11.800" r="2.100" fill="#4a4a4a"/><circle cx="22.200" cy="5.800" r="1.900" fill="#4a4a4a"/></svg>
<div class="a" style="left:1814px;top:135px;width:350px;height:630px;background:#464646;border-left:2px solid #2a2a2a"></div>
<div class="a" style="left:1816px;top:135px;width:348px;height:25px;background:#2f2f2f"></div>
<div class="a" style="left:1816px;top:135px;width:54px;height:26px;background:#464646"></div>
<div class="a" style="left:1870px;top:136px;width:50px;height:24px;background:#363636;border-right:1px solid #282828"></div>
<div class="a" style="left:1921px;top:136px;width:55px;height:24px;background:#363636;border-right:1px solid #282828"></div>
<div class="t" style="left:1826px;top:139.500px;font-size:16px;font-weight:bold;color:#ececec;text-decoration:none">工具</div>
<div class="t" style="left:1880px;top:139.500px;font-size:16px;font-weight:bold;color:#8c8c8c">库</div>
<div class="t" style="left:1931px;top:139.500px;font-size:16px;font-weight:bold;color:#8c8c8c">属性</div>
<div class="a" style="left:1821px;top:209px;width:342px;height:1px;background:#363636"></div><div class="a" style="left:1821px;top:210px;width:342px;height:1px;background:#4e4e4e"></div>
<div class="a" style="left:1821px;top:299px;width:342px;height:1px;background:#363636"></div><div class="a" style="left:1821px;top:300px;width:342px;height:1px;background:#4e4e4e"></div>
<div class="a" style="left:1821px;top:347px;width:342px;height:1px;background:#363636"></div><div class="a" style="left:1821px;top:348px;width:342px;height:1px;background:#4e4e4e"></div>
<div class="a" style="left:1821px;top:399px;width:342px;height:1px;background:#363636"></div><div class="a" style="left:1821px;top:400px;width:342px;height:1px;background:#4e4e4e"></div>
<div class="a" style="left:1821px;top:447px;width:342px;height:1px;background:#363636"></div><div class="a" style="left:1821px;top:448px;width:342px;height:1px;background:#4e4e4e"></div>
<div class="a" style="left:1824px;top:168px;width:44px;height:36px;background:#2f2f2f;border:1px solid #222;box-shadow:1px 1px 0 #555"></div>
<svg style="left:1839.5px;top:175.0px" width="16" height="24" viewBox="0 0 16 24"><path d="M1.500 1.500V19l4.500-4 3.500 8 3-1.300-3.500-7.700h6z" fill="#2f2f2f" stroke="#f2f2f2" stroke-width="1.800" stroke-linejoin="miter"/></svg>
<svg style="left:1889.0px;top:175.0px" width="16" height="24" viewBox="0 0 16 24"><defs><linearGradient id="sub" x1="0" y1="0" x2="0" y2="1"><stop offset="0" stop-color="#e6e6e6"/><stop offset="1" stop-color="#a6a6a6"/></linearGradient></defs><path d="M1 0V19.500l5-4.500 3.500 8.500 3.500-1.500-3.500-8h6.500z" fill="url(#sub)"/></svg>
<svg style="left:1934.5px;top:175.5px" width="27" height="21" viewBox="0 0 27 21"><path d="M0 0v15l4-3.500 9.500-0z" fill="#cfcfcf"/><rect x="9" y="2.500" width="16" height="16" fill="none" stroke="#cfcfcf" stroke-width="1.600" stroke-dasharray="3 2.200"/></svg>
<div class="a" style="left:1964px;top:198px;width:0;height:0;border-left:5px solid transparent;border-bottom:5px solid #bdbdbd"></div>
<svg style="left:1986.5px;top:173.5px" width="25" height="25" viewBox="0 0 25 25"><g fill="none" stroke="#707070" stroke-width="1.500"><circle cx="12.500" cy="12.500" r="10" fill="#5c5c5c"/><ellipse cx="12.500" cy="12.500" rx="4.500" ry="10"/><ellipse cx="12.500" cy="12.500" rx="12" ry="4.500"/></g></svg>
<div class="a" style="left:2015px;top:198px;width:0;height:0;border-left:5px solid transparent;border-bottom:5px solid #777"></div>
<svg style="left:2037.0px;top:174.5px" width="26" height="23" viewBox="0 0 26 23"><ellipse cx="13.500" cy="8.500" rx="11.500" ry="7.500" fill="none" stroke="#cfcfcf" stroke-width="1.800"/><path d="M5 13c-2 1-2.500 3.500-.5 4s3 1 2 3.500" fill="none" stroke="#cfcfcf" stroke-width="1.500"/><circle cx="4.500" cy="15" r="1.800" fill="none" stroke="#cfcfcf" stroke-width="1.200"/></svg>
<div class="a" style="left:2066px;top:198px;width:0;height:0;border-left:5px solid transparent;border-bottom:5px solid #bdbdbd"></div>
<svg style="left:1832.5px;top:221.0px" width="27" height="26" viewBox="0 0 27 26"><defs><linearGradient id="pen" x1="0" y1="0" x2="0" y2="1"><stop offset="0" stop-color="#e6e6e6"/><stop offset="1" stop-color="#a6a6a6"/></linearGradient></defs><path d="M17.500 0l9 8.500-3 3L14.500 3z" fill="url(#pen)"/><path d="M13 4.500l9 8.500-6.500 8L0 26l5-15z" fill="url(#pen)"/><path d="M1 25l9.500-9.500" stroke="#464646" stroke-width="1.400"/><circle cx="11" cy="15" r="1.800" fill="#464646"/></svg>
<div class="a" style="left:1862px;top:246px;width:0;height:0;border-left:5px solid transparent;border-bottom:5px solid #bdbdbd"></div>
<div class="t" style="left:1888.500px;top:219px;font-size:29px;color:#e4e4e4;font-family:'Liberation Serif',serif">T</div>
<svg style="left:1937.0px;top:223.0px" width="22" height="22" viewBox="0 0 22 22"><path d="M1 21L21 1" stroke="#cfcfcf" stroke-width="1.800"/></svg>
<svg style="left:1988.0px;top:224.5px" width="22" height="19" viewBox="0 0 22 19"><defs><linearGradient id="rc" x1="0" y1="0" x2="0" y2="1"><stop offset="0" stop-color="#929292"/><stop offset="1" stop-color="#6a6a6a"/></linearGradient></defs><rect x="1" y="1" width="20" height="17" fill="url(#rc)" stroke="#cfcfcf" stroke-width="1.600"/></svg>
<div class="a" style="left:2015px;top:246px;width:0;height:0;border-left:5px solid transparent;border-bottom:5px solid #bdbdbd"></div>
<svg style="left:2037.0px;top:224.5px" width="26" height="19" viewBox="0 0 26 19"><defs><linearGradient id="ov" x1="0" y1="0" x2="0" y2="1"><stop offset="0" stop-color="#929292"/><stop offset="1" stop-color="#6a6a6a"/></linearGradient></defs><ellipse cx="13" cy="9.500" rx="12" ry="8.500" fill="url(#ov)" stroke="#cfcfcf" stroke-width="1.600"/></svg>
<div class="a" style="left:2066px;top:246px;width:0;height:0;border-left:5px solid transparent;border-bottom:5px solid #bdbdbd"></div>
<svg style="left:2089.0px;top:223.5px" width="24" height="21" viewBox="0 0 24 21"><defs><linearGradient id="hx" x1="0" y1="0" x2="0" y2="1"><stop offset="0" stop-color="#929292"/><stop offset="1" stop-color="#6a6a6a"/></linearGradient></defs><path d="M1 10.500L6.500 1h11L23 10.500 17.500 20h-11z" fill="url(#hx)" stroke="#cfcfcf" stroke-width="1.600"/></svg>
<svg style="left:2140.0px;top:219.0px" width="26" height="26" viewBox="0 0 26 26"><defs><linearGradient id="pc" x1="0" y1="0" x2="0" y2="1"><stop offset="0" stop-color="#e6e6e6"/><stop offset="1" stop-color="#a6a6a6"/></linearGradient></defs><path d="M18 2l6 6-15 15-8 3 2-9z" fill="url(#pc)"/><path d="M1 26l2-6 4 4z" fill="#555"/></svg>
<svg style="left:1832.0px;top:263.0px" width="28" height="24" viewBox="0 0 28 24"><defs><linearGradient id="br" x1="0" y1="0" x2="0" y2="1"><stop offset="0" stop-color="#e6e6e6"/><stop offset="1" stop-color="#a6a6a6"/></linearGradient></defs><path d="M26 0l2 2-14 15-3-3z" fill="url(#br)"/><path d="M10 15l3.500 3.500c-1 4-6 6-13.500 4 3-1 4-3 5-5 1-2 3-3 5-2.500z" fill="url(#br)"/></svg>
<svg style="left:1833.5px;top:313.0px" width="25" height="23" viewBox="-2 -1 32 28"><defs><linearGradient id="bn" x1="0" y1="0" x2="0" y2="1"><stop offset="0" stop-color="#e6e6e6"/><stop offset="1" stop-color="#a6a6a6"/></linearGradient></defs><g transform="rotate(-40 14 13)"><rect x="3" y="10.800" width="22" height="5" fill="url(#bn)"/><circle cx="3" cy="10" r="3.600" fill="url(#bn)"/><circle cx="3" cy="16.500" r="3.600" fill="url(#bn)"/><circle cx="25" cy="10" r="3.600" fill="url(#bn)"/><circle cx="25" cy="16.500" r="3.600" fill="url(#bn)"/></g></svg>
<div class="a" style="left:1862px;top:337px;width:0;height:0;border-left:5px solid transparent;border-bottom:5px solid #bdbdbd"></div>
<svg style="left:1884.5px;top:310.3px" width="26" height="26" viewBox="0 0 26 26"><defs><linearGradient id="pb" x1="0" y1="0" x2="0" y2="1"><stop offset="0" stop-color="#e2e2e2"/><stop offset="1" stop-color="#9a9a9a"/></linearGradient></defs><path d="M1.500 15.500C3 13 15 9.500 18.500 10.500L21 19.500C19 23 8 26 5 24.500z" fill="url(#pb)"/><path d="M2.500 15.800C5 14 14 11.300 17.800 11.500" fill="none" stroke="#8a8a8a" stroke-width="1"/><path d="M7.500 14V5a3.200 3.800 0 0 1 6.400 0V14.500" fill="none" stroke="#d4d4d4" stroke-width="1.700"/><path d="M18.500 10.500C23 10.500 24.800 16 24.800 22.300a1.900 1.900 0 0 1-3.800 0C21 18 20.500 15 19.200 13z" fill="url(#pb)"/></svg>
<svg style="left:1933.0px;top:311.5px" width="21" height="21" viewBox="0 0 26 26"><defs><linearGradient id="ib" x1="0" y1="0" x2="0" y2="1"><stop offset="0" stop-color="#e2e2e2"/><stop offset="1" stop-color="#9a9a9a"/></linearGradient></defs><path d="M1.500 15.500C3 13 15 9.500 18.500 10.500L21 19.500C19 23 8 26 5 24.500z" fill="url(#ib)"/><path d="M2.500 15.800C5 14 14 11.300 17.800 11.500" fill="none" stroke="#8a8a8a" stroke-width="1"/><path d="M7.500 14V5a3.200 3.800 0 0 1 6.400 0V14.500" fill="none" stroke="#d4d4d4" stroke-width="1.700"/><path d="M18.500 10.500C23 10.500 24.800 16 24.800 22.300a1.900 1.900 0 0 1-3.800 0C21 18 20.500 15 19.200 13z" fill="url(#ib)"/></svg>
<div class="a" style="left:1948px;top:324.500px;width:14px;height:13px;border:3px solid #cfcfcf;border-left:none;border-top:none"></div><div class="a" style="left:1948px;top:324.500px;width:14px;height:3px;background:#cfcfcf;clip-path:inset(0 0 0 6px)"></div>
<svg style="left:1987.0px;top:311.0px" width="24" height="26" viewBox="0 0 24 26"><defs><linearGradient id="ey" x1="0" y1="0" x2="0" y2="1"><stop offset="0" stop-color="#e6e6e6"/><stop offset="1" stop-color="#a6a6a6"/></linearGradient></defs><g transform="rotate(45 12 13)"><rect x="9.500" y="-2" width="6" height="9" rx="2.500" fill="url(#ey)"/><rect x="7" y="6.500" width="11" height="3" fill="url(#ey)"/><path d="M10 9.500h5v12l-2.500 5-2.500-5z" fill="none" stroke="#cfcfcf" stroke-width="1.500"/></g></svg>
<svg style="left:2037.5px;top:314.0px" width="25" height="20" viewBox="0 0 25 20"><defs><linearGradient id="er" x1="0" y1="0" x2="0" y2="1"><stop offset="0" stop-color="#e6e6e6"/><stop offset="1" stop-color="#a6a6a6"/></linearGradient></defs><path d="M8 0h17l-8 13H0z" fill="url(#er)"/><path d="M0 14h17v5.500H0z" fill="#a0a0a0"/><path d="M17 14l8-13v5l-8 13.500z" fill="#8a8a8a"/></svg>
<svg style="left:2087.0px;top:312.0px" width="28" height="24" viewBox="0 0 28 24"><path d="M3 1c4 0 7 4 7 9 2-3 6-5 9-3 4-2 8 1 8.500 7-2-3-5-3-6.500 0-2 3-7 5-11 5-3 0-5-1-6-2 3-3 3-10-1-16z" fill="#cfcfcf"/><path d="M3 22L17 3" stroke="#464646" stroke-width="1.200"/><circle cx="10" cy="13" r="2.800" fill="#464646" stroke="#eee" stroke-width="1.300"/><circle cx="3.500" cy="21" r="1.800" fill="#464646" stroke="#eee" stroke-width="1"/><circle cx="17" cy="4" r="1.800" fill="#464646" stroke="#eee" stroke-width="1"/></svg>
<svg style="left:1832.0px;top:363.0px" width="28" height="18" viewBox="0 0 28 18"><defs><linearGradient id="cm" x1="0" y1="0" x2="0" y2="1"><stop offset="0" stop-color="#e6e6e6"/><stop offset="1" stop-color="#a6a6a6"/></linearGradient></defs><rect x="0" y="1" width="19" height="16" rx="3" fill="url(#cm)"/><path d="M18 9l10-7.500v15z" fill="url(#cm)"/></svg>
<svg style="left:1884.0px;top:359.0px" width="26" height="25" viewBox="0 0 26 25"><defs><linearGradient id="hd" x1="0" y1="0" x2="0" y2="1"><stop offset="0" stop-color="#e6e6e6"/><stop offset="1" stop-color="#a6a6a6"/></linearGradient></defs><path d="M6 14V5.500a1.700 1.700 0 0 1 3.400 0V3a1.700 1.700 0 0 1 3.400 0v-.8a1.700 1.700 0 0 1 3.400 0V4a1.700 1.700 0 0 1 3.400 0V13l2-3.500a1.800 1.800 0 0 1 3.200 1.500L22 18c-1 3-2.500 4.500-3 7H8.500c-.5-2-1.500-3-3-5L1 13.500a1.800 1.800 0 0 1 2.800-2z" fill="url(#hd)"/><path d="M9.400 5v7M12.800 3v9M16.200 3.500V12" stroke="#666" stroke-width=".9"/></svg>
<div class="a" style="left:1913px;top:384px;width:0;height:0;border-left:5px solid transparent;border-bottom:5px solid #bdbdbd"></div>
<svg style="left:1936.0px;top:360.0px" width="24" height="24" viewBox="0 0 24 24"><circle cx="9" cy="9" r="7" fill="#8e8e8e" stroke="#cfcfcf" stroke-width="2.200"/><path d="M14.500 14.500l8 8" stroke="#cfcfcf" stroke-width="3.600" stroke-linecap="round"/><circle cx="7" cy="7" r="2.500" fill="#b8b8b8"/></svg>
<svg style="left:1833.0px;top:415.0px" width="18" height="18" viewBox="0 0 18 18"><defs><linearGradient id="p2" x1="0" y1="0" x2="0" y2="1"><stop offset="0" stop-color="#e6e6e6"/><stop offset="1" stop-color="#a6a6a6"/></linearGradient></defs><path d="M12.500 1l4.500 4.500-10.500 10.500-5.500 2 1.500-6z" fill="url(#p2)"/><path d="M1 18l1.500-4 2.800 2.800z" fill="#444"/></svg>
<div class="a" style="left:1861px;top:410px;width:30px;height:29px;background:#343434;border:1px solid #222"></div>
<div class="a" style="left:1902px;top:411px;width:29px;height:27px;background:#2f2f2f;border:1px solid #222;box-shadow:1px 1px 0 #555"></div>
<svg style="left:1906.0px;top:415.0px" width="20" height="20" viewBox="0 0 26 26"><defs><linearGradient id="fb" x1="0" y1="0" x2="0" y2="1"><stop offset="0" stop-color="#e2e2e2"/><stop offset="1" stop-color="#9a9a9a"/></linearGradient></defs><path d="M1.500 15.500C3 13 15 9.500 18.500 10.500L21 19.500C19 23 8 26 5 24.500z" fill="url(#fb)"/><path d="M2.500 15.800C5 14 14 11.300 17.800 11.500" fill="none" stroke="#8a8a8a" stroke-width="1"/><path d="M7.500 14V5a3.200 3.800 0 0 1 6.400 0V14.500" fill="none" stroke="#d4d4d4" stroke-width="1.700"/><path d="M18.500 10.500C23 10.500 24.800 16 24.800 22.300a1.900 1.900 0 0 1-3.800 0C21 18 20.500 15 19.200 13z" fill="url(#fb)"/></svg>
<div class="a" style="left:1936px;top:410px;width:30px;height:29px;background:#339a6b;border:1px solid #222"></div>
<div class="a" style="left:1976px;top:413px;width:11px;height:11px;background:#eee;border:1.500px solid #111"></div><div class="a" style="left:1981px;top:418px;width:11px;height:11px;background:#111;border:1.500px solid #eee"></div>
<div class="a" style="left:1997px;top:412px;width:8px;height:8px;background:#111;border:1.500px solid #eee"></div><div class="a" style="left:1997px;top:422px;width:8px;height:8px;background:#eee;border:1px solid #111"></div>
<svg style="left:2007.0px;top:414.0px" width="10" height="14" viewBox="0 0 10 14"><path d="M1 3c5 0 7 3 7 8" fill="none" stroke="#e6e6e6" stroke-width="1.500"/><path d="M0 3l4-3v6zM5 10h6l-3 4z" fill="#e6e6e6"/></svg>
<div class="a" style="left:1824px;top:459px;width:44px;height:36px;background:#2f2f2f;border:1px solid #222;box-shadow:1px 1px 0 #555"></div>
<svg style="left:1836.0px;top:466.5px" width="20" height="20" viewBox="0 0 20 20"><defs><linearGradient id="mg" x1="0" y1="0" x2="0" y2="1"><stop offset="0" stop-color="#e0e0e0"/><stop offset="1" stop-color="#9a9a9a"/></linearGradient></defs><path d="M2 19.500V17h.8C1 14.500 0 12 0 9.500a10 9.500 0 0 1 20 0c0 2.500-1 5-2.800 7.500H18v2.500h-6.500v-4c1.300-1.500 2.300-3.500 2.300-6a3.800 4 0 0 0-7.600 0c0 2.500 1 4.500 2.300 6v4z" fill="url(#mg)"/><path d="M2.500 16.200h5.500M12 16.200h5.500" stroke="#2f2f2f" stroke-width="1.200"/></svg>
<svg style="left:1890.0px;top:467.0px" width="14" height="22" viewBox="0 0 14 22"><path d="M12 2C7 0 2 3 3.500 7s8 4 8 9-6 6-10 3" fill="none" stroke="#6c6c6c" stroke-width="1.600"/></svg>
<svg style="left:1942.0px;top:467.0px" width="12" height="22" viewBox="0 0 12 22"><path d="M2 0v10h8v12" fill="none" stroke="#6c6c6c" stroke-width="1.600"/></svg>
<div class="a" style="left:0;top:1380px;width:2160px;height:60px;background:linear-gradient(90deg,#d9d9d9 0,#d9d9d9 3%,#dedcd8 28%,#e0ddd8 42%,#dcdbd8 55%,#dededc 66%,#e6e6e5 78%,#ebebeb 100%)"></div>
<svg style="left:23.500px;top:1397.500px" width="25" height="25" viewBox="0 0 25 25"><path d="M0 3.400L10.200 2v9.800H0zM11.400 1.800L25 0v11.800H11.400zM0 13h10.200v9.800L0 21.400zM11.400 13H25v12l-13.600-1.900z" fill="#000"/></svg>
<div class="a" style="left:74px;top:1382px;width:512px;height:56px;background:#fff;border:1px solid #f4f4f4"></div>
<svg style="left:89px;top:1397px" width="26" height="26" viewBox="0 0 26 26"><circle cx="15.600" cy="9.700" r="7.600" fill="none" stroke="#111" stroke-width="1.700"/><path d="M10.300 15.500L1.200 24.500" stroke="#111" stroke-width="1.900"/></svg>
<div class="t" style="left:132px;top:1399.500px;font-size:24px;color:#1a1a1a;letter-spacing:-.1px">在这里输入你要搜索的内容</div>
<div class="a" style="left:612px;top:1398.500px;width:23px;height:23px;border-radius:50%;border:3.200px solid #0c0c0c"></div>
<svg style="left:683px;top:1397px" width="27" height="24" viewBox="0 0 27 24"><g fill="none" stroke="#111" stroke-width="1.500"><rect x="2.500" y="6" width="15" height="12"/><path d="M0 1.500h20M0 22.500h20M23.500 0v24"/></g><rect x="22" y="8" width="3" height="3" fill="#111"/></svg>
<svg style="left:755.500px;top:1393px" width="34" height="34" viewBox="-17 -17 34 34"><circle r="16.800" fill="#dd4b3e"/><path d="M0 0L-14.550 -8.400A16.800 16.800 0 0 0 -7.200 15.200z" fill="#1da462"/><path d="M0 0L-7.200 15.200A16.800 16.800 0 0 0 16.800 -0.500 16.800 16.800 0 0 0 14.550 -8.400z" fill="#ffcd40"/><path d="M0 -8.400H14.550A16.800 16.800 0 0 0 -14.550 -8.400L-7 4z" fill="#dd4b3e"/><path d="M-14.550 -8.400L-7.300 4.200 0 0z" fill="#1da462"/><circle r="7.700" fill="#fff"/><circle r="6.100" fill="#4c8bf5"/></svg>
<svg style="left:829px;top:1395px" width="39" height="32" viewBox="0 0 39 32"><path d="M0 1h9l6 17 5-17h8l-9 28h-8z" fill="#f2251a"/><path d="M20 1h17l-8 20-5-7z" fill="#ff5a36"/><path d="M29 1h8l-10 28h-7z" fill="#e01e14"/><rect x="26" y="17" width="13" height="14" rx="2" fill="#4d8df6"/><path d="M28.500 21l2 7 2-5 2 5 2-7" fill="none" stroke="#fff" stroke-width="1.500"/></svg>
<div class="a" style="left:887px;top:1380px;width:73px;height:60px;background:#f0efed"></div>
<div class="a" style="left:906px;top:1393px;width:34px;height:32px;background:#2b0903;border:2px solid #e8442b"></div>
<div class="t" style="left:911px;top:1398px;font-size:22px;color:#ff5538;transform:scaleX(.9);transform-origin:0 0">An</div>
<div class="a" style="left:981px;top:1393px;width:33px;height:32px;background:linear-gradient(#1473c4,#0a4f96);box-shadow:-1px 2px 0 #083e77"></div>
<div class="t" style="left:987px;top:1398px;font-size:21px;font-weight:bold;color:#9bdcff;transform:scaleX(.92);transform-origin:0 0">Ps</div>
<svg style="left:1056px;top:1396px" width="34" height="28" viewBox="0 0 34 28"><path d="M0 2a2 2 0 0 1 2-2h10l3 3h17a2 2 0 0 1 2 2v4H0z" fill="#e8b73a"/><rect x="0" y="6" width="34" height="19" rx="1" fill="#ffd65c"/><path d="M6 17h22v11H21v-6h-8v6H6z" fill="#3a93e0"/></svg>
<div class="a" style="left:743px;top:1437px;width:61px;height:3px;background:#c9632e"></div>
<div class="a" style="left:818px;top:1437px;width:49px;height:3px;background:#c9632e"></div>
<div class="a" style="left:867px;top:1437px;width:11px;height:3px;background:#e2a88c"></div>
<div class="a" style="left:887px;top:1437px;width:73px;height:3px;background:#c9632e"></div>
<div class="a" style="left:968px;top:1437px;width:61px;height:3px;background:#c9632e"></div>
<div class="a" style="left:1043px;top:1437px;width:49px;height:3px;background:#c9632e"></div>
<div class="a" style="left:1092px;top:1437px;width:12px;height:3px;background:#e2a88c"></div>
<div class="a" style="left:1938px;top:1348px;width:222px;height:32px;background:#fff"></div>
<div class="a" style="left:1939px;top:1350px;width:2px;height:28px;background:repeating-linear-gradient(#bbb 0,#bbb 2px,transparent 2px,transparent 4px)"></div>
<div class="a" style="left:1950px;top:1352px;width:24px;height:23px;border:1px solid #888"></div>
<div class="t" style="left:1953px;top:1355px;font-size:18px;font-family:'Liberation Sans','Noto Sans CJK SC',sans-serif;color:#000">拼</div>
<div class="t" style="left:1983.500px;top:1353px;font-size:23px;font-weight:bold;font-family:'Liberation Sans','Noto Sans CJK SC',sans-serif;color:#000">中</div>
<svg style="left:2016px;top:1353px" width="20" height="22" viewBox="0 0 20 22"><path d="M9 1c8 2 10 12 3 17-3 2-7 2-10 0 6 0 9-3 9-8 0-4-1-7-2-9z" fill="none" stroke="#000" stroke-width="3.200"/></svg>
<svg style="left:2045px;top:1354px" width="20" height="22" viewBox="0 0 20 22"><circle cx="4" cy="4.500" r="2.800" fill="none" stroke="#000" stroke-width="2.200"/><path d="M11 9h6v5c0 3-2 5-5 6v-2c1.500-.8 2-1.500 2-3h-3z" fill="#000"/></svg>
<div class="t" style="left:2072px;top:1353px;font-size:24px;font-weight:bold;font-family:'Liberation Sans','Noto Sans CJK SC',sans-serif;color:#000">简</div>
<svg style="left:2104px;top:1352.500px" width="23" height="23" viewBox="-11.500 -11.500 23 23"><circle r="8.500" fill="#000"/><circle r="9.300" fill="none" stroke="#000" stroke-width="4.400" stroke-dasharray="4.300 3"/><circle r="4.300" fill="#fff"/><circle r="4.300" fill="none" stroke="#000" stroke-width="1" stroke-dasharray="1.500 1.500"/><circle r="1.700" fill="#000"/></svg>
<div class="a" style="left:2143px;top:1357.500px;width:8px;height:3px;background:#000"></div><div class="a" style="left:2143px;top:1368px;width:0;height:0;border:4px solid transparent;border-top:5px solid #000;border-bottom:none"></div>
<svg style="left:1685px;top:1403px" width="20" height="12" viewBox="0 0 20 12"><path d="M1 11L10 1.500 19 11" fill="none" stroke="#111" stroke-width="1.600"/></svg>
<svg style="left:1720px;top:1400px" width="22" height="20" viewBox="0 0 22 20"><path d="M0 5h22M0 15h22" stroke="#111" stroke-width="3"/><rect x="12.500" y="0" width="3.600" height="10" fill="#111"/><rect x="5" y="10" width="3.600" height="10" fill="#111"/><path d="M0 5l4-3.500v7zM22 15l-4-3.500v7z" fill="#111"/></svg>
<svg style="left:1754px;top:1397px" width="27" height="27" viewBox="0 0 27 27"><path d="M1 4.500L25 1v21L1 20z" fill="none" stroke="#111" stroke-width="1.400"/><path d="M8 11a5 5 0 0 1 9-1.500M17 14a5 5 0 0 1-9 1.500" fill="none" stroke="#111" stroke-width="1.300"/><path d="M17.500 6.500v3.500H14M7.500 18.500V15H11" fill="none" stroke="#111" stroke-width="1.300"/><circle cx="19.300" cy="19.700" r="5.600" fill="#2f6fbe"/></svg>
<svg style="left:1790px;top:1400px" width="26" height="18" viewBox="0 0 26 18"><rect x="5" y="4" width="19" height="11" fill="none" stroke="#111" stroke-width="1.400"/><rect x="7" y="6" width="15" height="7" fill="#111"/><rect x="24" y="7" width="2" height="5" fill="#111"/><path d="M2 0v3M6 0v3M0.500 3h7v3.500a3.500 3.500 0 0 1-3 3v5" fill="none" stroke="#111" stroke-width="1.400"/></svg>
<svg style="left:1830px;top:1400px" width="22" height="20" viewBox="0 0 22 20"><g fill="none" stroke-width="1.500"><path d="M1 19A18 18 0 0 1 19 1" stroke="#333"/><path d="M6 19A13 13 0 0 1 19 6" stroke="#333"/><path d="M11 19a8 8 0 0 1 8-8" stroke="#555"/></g><circle cx="18" cy="18" r="1.800" fill="#111"/></svg>
<svg style="left:1863px;top:1399px" width="24" height="20" viewBox="0 0 24 20"><path d="M1 6.500h4l5-5v17l-5-5H1z" fill="none" stroke="#111" stroke-width="1.400"/><path d="M13 7a4 4 0 0 1 0 6" fill="none" stroke="#111" stroke-width="1.300"/><path d="M16 4.500a8 8 0 0 1 0 11" fill="none" stroke="#777" stroke-width="1.200"/><path d="M19 2a12 12 0 0 1 0 16" fill="none" stroke="#aaa" stroke-width="1.100"/></svg>
<div class="t" style="left:1928px;top:1388px;font-size:18px;color:#111;letter-spacing:.5px">11:04</div>
<div class="t" style="left:1905px;top:1415px;font-size:18px;color:#111;letter-spacing:1.400px">2022/5/22</div>
<svg style="left:2028px;top:1395px" width="33" height="26" viewBox="0 0 33 26"><g fill="#141414"><path d="M0.750 0L4.900 3.200V25.500H0.750z"/><path d="M8.040 7.750L16.375 16.080L24.700 7.750V25.460H20.900V16.430L16.375 20.940L11.860 16.430V25.460H8.040z"/><path d="M27.800 3.200L32 0V25.500H27.800z"/></g></svg>
<svg style="left:2098px;top:1398px" width="24" height="24" viewBox="0 0 24 24"><path d="M0 0h23.800v18.700H9.500l1.200 5.200-5-5.200H0z" fill="#000"/><path d="M5 5.500h14M5 9.400h14M5 13.500h9" stroke="#f0f0f0" stroke-width="1.300"/></svg>
<div class="a" style="left:2109.500px;top:1409.300px;width:24.400px;height:24.400px;border-radius:50%;background:rgba(222,222,222,.85);border:1px solid #a6a6a6"></div>
<div class="t" style="left:2116.500px;top:1412px;font-size:19px;font-weight:bold;color:#0a0a0a">3</div>
<div class="a" style="left:2152px;top:1382px;width:2px;height:58px;background:#b4b4b4"></div>
</body></html>
